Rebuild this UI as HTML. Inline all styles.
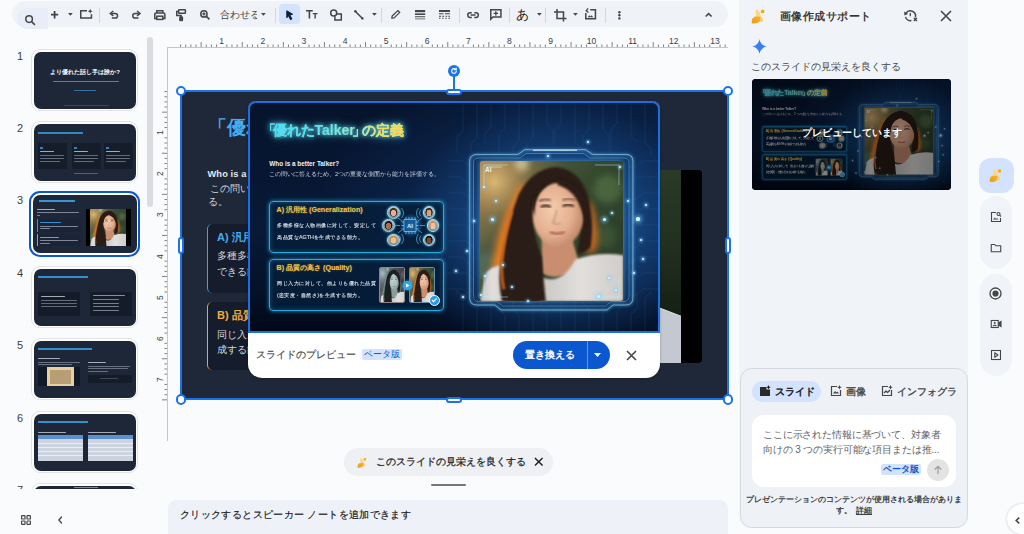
<!DOCTYPE html>
<html><head><meta charset="utf-8">
<style>
*{margin:0;padding:0;box-sizing:border-box}
html,body{width:1024px;height:534px;overflow:hidden;background:#f9fbfd;font-family:"Liberation Sans",sans-serif;color:#1f1f1f;position:relative}
.a{position:absolute}
svg{display:block}
#tb{left:12px;top:1px;width:716px;height:25.5px;border-radius:13px;background:#eff2f7}
.num{position:absolute;font-size:11px;color:#3c4043;width:16px;text-align:center;line-height:12px}
.thumb{position:absolute;left:31px;width:107px;height:62px;border-radius:9px;border:1.5px solid #e1e3e6;background:#fff;padding:1.5px}
.thumb .in{width:100%;height:100%;border-radius:7px;background:#1e2738;position:relative;overflow:hidden}
.thumb.sel{left:29.3px;width:110.7px;height:65.5px;margin-top:-1.7px;border:2.6px solid #0b57d0;padding:1.4px;border-radius:11px}
.nw{white-space:nowrap}

</style></head><body>
<!-- toolbar -->
<div id="tb" class="a"></div>
<div class="a" style="left:17px;top:8px;width:31px;height:21px;border-radius:10px 0 0 10px;background:#e9edf8"></div>
<svg class="a" style="left:25.30px;top:14.50px;overflow:visible" width="10.10" height="9.80" viewBox="0 0 10.10 9.80" fill="none" stroke="#444746" stroke-width="1.5" stroke-linecap="butt" stroke-linejoin="miter" ><circle cx="4.1" cy="4.1" r="3.3"/><path d="M6.5 6.5L9.9 9.9" stroke-width="1.7"/></svg>
<svg class="a" style="left:50.60px;top:10.70px;overflow:visible" width="7.20" height="7.40" viewBox="0 0 7.20 7.40" fill="none" stroke="#444746" stroke-width="1.5" stroke-linecap="butt" stroke-linejoin="miter" ><path d="M3.6 0V7.4M0 3.7H7.2" stroke-width="1.8"/></svg>
<svg class="a" style="left:67.90px;top:13.20px;overflow:visible" width="4.80" height="2.80" viewBox="0 0 4.80 2.80" fill="none" stroke="#444746" stroke-width="1.5" stroke-linecap="butt" stroke-linejoin="miter" ><path d="M0 0H4.8L2.4 2.8Z" fill="#444746" stroke="none"/></svg>
<svg class="a" style="left:80.00px;top:10.30px;overflow:visible" width="12.20" height="8.70" viewBox="0 0 12.20 8.70" fill="none" stroke="#444746" stroke-width="1.5" stroke-linecap="butt" stroke-linejoin="miter" ><path d="M7 0.75H0.75V7.95H11.45V4.2"/><path d="M10.2 -1.2L10.9 0.6 12.7 1.3 10.9 2 10.2 3.8 9.5 2 7.7 1.3 9.5 0.6Z" fill="#444746" stroke="none"/></svg>
<div class="a" style="left:99.30px;top:7.5px;width:1px;height:15px;background:#d3d6db"></div>
<svg class="a" style="left:109.80px;top:11.20px;overflow:visible" width="8.30" height="7.30" viewBox="0 0 8.30 7.30" fill="none" stroke="#444746" stroke-width="1.5" stroke-linecap="butt" stroke-linejoin="miter" ><path d="M1.6 2.4H5.2A2.35 2.35 0 0 1 5.2 7.1H1.8"/><path d="M3.3 0L0.3 2.4 3.3 4.8" stroke-linejoin="miter"/></svg>
<svg class="a" style="left:131.80px;top:11.20px;overflow:visible" width="8.30" height="7.30" viewBox="0 0 8.30 7.30" fill="none" stroke="#444746" stroke-width="1.5" stroke-linecap="butt" stroke-linejoin="miter" ><path d="M6.7 2.4H3.1A2.35 2.35 0 0 0 3.1 7.1H6.5"/><path d="M5 0L8 2.4 5 4.8"/></svg>
<svg class="a" style="left:153.70px;top:9.60px;overflow:visible" width="11.60" height="10.20" viewBox="0 0 11.60 10.20" fill="none" stroke="#444746" stroke-width="1.5" stroke-linecap="butt" stroke-linejoin="miter" ><path d="M2.8 3V0.75H8.8V3"/><path d="M2.6 8.5H0.75V4.2Q0.75 3 2 3H9.6Q10.85 3 10.85 4.2V8.5H9"/><rect x="2.8" y="6.2" width="6" height="3.25"/></svg>
<svg class="a" style="left:176.30px;top:8.90px;overflow:visible" width="10.20" height="11.60" viewBox="0 0 10.20 11.60" fill="none" stroke="#444746" stroke-width="1.5" stroke-linecap="butt" stroke-linejoin="miter" ><rect x="2.6" y="0.75" width="6.8" height="3.6" rx="0.6"/><path d="M2.6 2.6H0.75V6.6H5.1V8.4"/><rect x="3.9" y="8" width="2.5" height="3.6" rx="0.5" fill="#444746"/></svg>
<svg class="a" style="left:200.20px;top:10.00px;overflow:visible" width="9.60" height="9.60" viewBox="0 0 9.60 9.60" fill="none" stroke="#444746" stroke-width="1.5" stroke-linecap="butt" stroke-linejoin="miter" ><circle cx="3.9" cy="3.9" r="3.15"/><path d="M6.2 6.2L9.4 9.4" stroke-width="1.7"/><path d="M3.9 2.2V5.6M2.2 3.9H5.6" stroke-width="1.2"/></svg>
<div class="a nw" style="left:220px;top:7.5px;font-size:10.2px;color:#444746;line-height:14px;width:37px;overflow:hidden">合わせる</div>
<svg class="a" style="left:261.10px;top:12.60px;overflow:visible" width="4.80" height="2.80" viewBox="0 0 4.80 2.80" fill="none" stroke="#444746" stroke-width="1.5" stroke-linecap="butt" stroke-linejoin="miter" ><path d="M0 0H4.8L2.4 2.8Z" fill="#444746" stroke="none"/></svg>
<div class="a" style="left:274.90px;top:7.5px;width:1px;height:15px;background:#d3d6db"></div>
<div class="a" style="left:279px;top:4.2px;width:20.6px;height:19.4px;border-radius:4px;background:#d3e3fd"></div>
<svg class="a" style="left:285.70px;top:9.70px;overflow:visible" width="7.30" height="10.30" viewBox="0 0 7.30 10.30" fill="none" stroke="#444746" stroke-width="1.5" stroke-linecap="butt" stroke-linejoin="miter" ><path d="M0.8 0.8L6.6 4.2 3.9 5.1 5.9 9 4.5 9.7 2.6 5.8 0.8 7.8Z" fill="#0b1f3f" stroke="#0b1f3f" stroke-width="1" stroke-linejoin="round"/></svg>
<svg class="a" style="left:305.70px;top:10.30px;overflow:visible" width="11.50" height="8.50" viewBox="0 0 11.50 8.50" fill="none" stroke="#444746" stroke-width="1.5" stroke-linecap="butt" stroke-linejoin="miter" ><path d="M0 0.8H6.8M3.4 0.8V8.5" stroke-width="1.6"/><path d="M6.8 3.6H11.5M9.15 3.6V8.5" stroke-width="1.4"/></svg>
<svg class="a" style="left:329.90px;top:9.00px;overflow:visible" width="12.10" height="11.60" viewBox="0 0 12.10 11.60" fill="none" stroke="#444746" stroke-width="1.5" stroke-linecap="butt" stroke-linejoin="miter" ><circle cx="3.7" cy="3.9" r="3"/><path d="M6.9 4.9H11.3V10.9H4.9V7.3"/></svg>
<svg class="a" style="left:353.50px;top:9.70px;overflow:visible" width="9.70" height="9.70" viewBox="0 0 9.70 9.70" fill="none" stroke="#444746" stroke-width="1.5" stroke-linecap="butt" stroke-linejoin="miter" ><path d="M1.2 1.2L8.5 8.5" stroke-width="1.5"/><circle cx="1.3" cy="1.3" r="1.2" fill="#444746" stroke="none"/><circle cx="8.4" cy="8.4" r="1.2" fill="#444746" stroke="none"/></svg>
<svg class="a" style="left:371.90px;top:13.20px;overflow:visible" width="4.80" height="2.80" viewBox="0 0 4.80 2.80" fill="none" stroke="#444746" stroke-width="1.5" stroke-linecap="butt" stroke-linejoin="miter" ><path d="M0 0H4.8L2.4 2.8Z" fill="#444746" stroke="none"/></svg>
<div class="a" style="left:380.80px;top:7.5px;width:1px;height:15px;background:#d3d6db"></div>
<svg class="a" style="left:391.00px;top:9.60px;overflow:visible" width="9.50" height="8.90" viewBox="0 0 9.50 8.90" fill="none" stroke="#444746" stroke-width="1.5" stroke-linecap="butt" stroke-linejoin="miter" ><path d="M0.8 8.1L1.2 6 6.8 0.6 8.8 2.4 3.1 7.9Z" stroke-width="1.3" stroke-linejoin="round"/></svg>
<svg class="a" style="left:414.90px;top:10.30px;overflow:visible" width="10.20" height="9.50" viewBox="0 0 10.20 9.50" fill="none" stroke="#444746" stroke-width="1.5" stroke-linecap="butt" stroke-linejoin="miter" ><rect x="0" y="0" width="10.2" height="2.2" fill="#444746" stroke="none"/><rect x="0" y="3.4" width="10.2" height="1.6" fill="#444746" stroke="none"/><rect x="0" y="6.1" width="10.2" height="1.2" fill="#444746" stroke="none" opacity=".85"/><rect x="0" y="8.4" width="10.2" height="1" fill="#444746" stroke="none" opacity=".7"/></svg>
<svg class="a" style="left:438.80px;top:10.30px;overflow:visible" width="11.00" height="8.90" viewBox="0 0 11.00 8.90" fill="none" stroke="#444746" stroke-width="1.5" stroke-linecap="butt" stroke-linejoin="miter" ><rect x="0" y="0" width="11" height="2" fill="#444746" stroke="none"/><path d="M0 3.7H4.5M6 3.7H11M0 6.2H2.2M3.4 6.2H5.2M6.6 6.2H8.2M9.4 6.2H11M0 8.3H1.4M3 8.3H4.4M6.2 8.3H7.6M9.4 8.3H11" stroke-width="1.1"/></svg>
<div class="a" style="left:459.30px;top:7.5px;width:1px;height:15px;background:#d3d6db"></div>
<svg class="a" style="left:467.10px;top:11.60px;overflow:visible" width="12.10" height="6.20" viewBox="0 0 12.10 6.20" fill="none" stroke="#444746" stroke-width="1.5" stroke-linecap="butt" stroke-linejoin="miter" ><path d="M4.8 0.75H3.1A2.35 2.35 0 0 0 3.1 5.45H4.8M7.3 0.75H9A2.35 2.35 0 0 1 9 5.45H7.3M3.6 3.1H8.5" stroke-width="1.5"/></svg>
<svg class="a" style="left:490.10px;top:8.90px;overflow:visible" width="11.70" height="10.90" viewBox="0 0 11.70 10.90" fill="none" stroke="#444746" stroke-width="1.5" stroke-linecap="butt" stroke-linejoin="miter" ><path d="M0.75 10.2V0.75H10.95V8H2.9Z" stroke-linejoin="miter"/><path d="M5.85 2.2V6.6M3.65 4.4H8.05" stroke-width="1.4"/></svg>
<div class="a" style="left:509.20px;top:7.5px;width:1px;height:15px;background:#d3d6db"></div>
<div class="a nw" style="left:516px;top:6.5px;font-size:12.5px;color:#1f1f1f;line-height:17px">あ</div>
<svg class="a" style="left:536.60px;top:13.20px;overflow:visible" width="4.80" height="2.80" viewBox="0 0 4.80 2.80" fill="none" stroke="#444746" stroke-width="1.5" stroke-linecap="butt" stroke-linejoin="miter" ><path d="M0 0H4.8L2.4 2.8Z" fill="#444746" stroke="none"/></svg>
<div class="a" style="left:545.10px;top:7.5px;width:1px;height:15px;background:#d3d6db"></div>
<svg class="a" style="left:553.80px;top:8.60px;overflow:visible" width="12.50" height="12.50" viewBox="0 0 12.50 12.50" fill="none" stroke="#444746" stroke-width="1.5" stroke-linecap="butt" stroke-linejoin="miter" ><path d="M3 0V9.5H12.5M0 3H9.5V12.5" stroke-width="1.5"/></svg>
<svg class="a" style="left:572.80px;top:13.20px;overflow:visible" width="4.80" height="2.80" viewBox="0 0 4.80 2.80" fill="none" stroke="#444746" stroke-width="1.5" stroke-linecap="butt" stroke-linejoin="miter" ><path d="M0 0H4.8L2.4 2.8Z" fill="#444746" stroke="none"/></svg>
<svg class="a" style="left:585.40px;top:9.20px;overflow:visible" width="11.20" height="10.60" viewBox="0 0 11.20 10.60" fill="none" stroke="#444746" stroke-width="1.5" stroke-linecap="butt" stroke-linejoin="miter" ><path d="M0.75 4V9.85H10.45V0.75H5.2"/><path d="M3.2 -0.6L1.2 1.6 3.4 3.6" stroke-width="1.3"/><path d="M2.6 8.3L4.3 6.3 5.5 7.4 6.4 6.3 8.4 8.3Z" fill="#444746" stroke="none"/></svg>
<div class="a" style="left:604.70px;top:7.5px;width:1px;height:15px;background:#d3d6db"></div>
<svg class="a" style="left:618.00px;top:10.50px;overflow:visible" width="2.80" height="8.60" viewBox="0 0 2.80 8.60" fill="none" stroke="#444746" stroke-width="1.5" stroke-linecap="butt" stroke-linejoin="miter" ><circle cx="1.4" cy="1.2" r="1.2" fill="#444746" stroke="none"/><circle cx="1.4" cy="4.3" r="1.2" fill="#444746" stroke="none"/><circle cx="1.4" cy="7.4" r="1.2" fill="#444746" stroke="none"/></svg>
<svg class="a" style="left:704.80px;top:12.90px;overflow:visible" width="7.20" height="4.10" viewBox="0 0 7.20 4.10" fill="none" stroke="#444746" stroke-width="1.5" stroke-linecap="butt" stroke-linejoin="miter" ><path d="M0.6 3.6L3.6 0.6 6.6 3.6" stroke-width="1.5"/></svg><!-- filmstrip -->
<div class="a" style="left:147px;top:37px;width:6px;height:170px;border-radius:3px;background:#dadce0"></div>
<div class="num" style="left:12px;top:50px">1</div>
<div class="thumb" style="top:49px"><div class="in"><div class="a nw" style="left:51.5px;top:16.5px;font-size:12px;font-weight:bold;color:#fff;line-height:14px;transform:translateX(-50%) scale(.5);transform-origin:50% 0">より優れた話し手は誰か?</div><div class="a" style="left:19px;top:29px;width:66px;height:1px;background:#9aa6b8;opacity:0.65;border-radius:0.5px"></div><div class="a" style="left:40px;top:38px;width:22px;height:1px;background:#3fa0e0;opacity:0.61;border-radius:0.5px"></div><div class="a" style="left:30px;top:53px;width:45px;height:0.8px;background:#4a5a70;opacity:0.61;border-radius:0.5px"></div></div></div>
<div class="num" style="left:12px;top:122px">2</div>
<div class="thumb" style="top:121px"><div class="in"><div class="a" style="left:4.5px;top:8px;width:45px;height:2.3px;background:#3aa0e8;opacity:0.81;border-radius:0.5px"></div><div class="a" style="left:4.5px;top:19.5px;width:29px;height:26px;background:#151d2b;opacity:1;border-radius:1px"></div><div class="a" style="left:6.5px;top:23px;width:3px;height:2px;background:#3aa0e8;opacity:0.81;border-radius:0.5px"></div><div class="a" style="left:6.5px;top:27px;width:14px;height:1.4px;background:#e0e4ea;opacity:0.71;border-radius:0.5px"></div><div class="a" style="left:6.5px;top:31px;width:24px;height:1px;background:#b0b8c4;opacity:0.51;border-radius:0.5px"></div><div class="a" style="left:6.5px;top:34px;width:24px;height:1px;background:#b0b8c4;opacity:0.51;border-radius:0.5px"></div><div class="a" style="left:6.5px;top:37px;width:20px;height:1px;background:#b0b8c4;opacity:0.51;border-radius:0.5px"></div><div class="a" style="left:38px;top:19.5px;width:29px;height:26px;background:#151d2b;opacity:1;border-radius:1px"></div><div class="a" style="left:40px;top:23px;width:3px;height:2px;background:#3aa0e8;opacity:0.81;border-radius:0.5px"></div><div class="a" style="left:40px;top:27px;width:14px;height:1.4px;background:#e0e4ea;opacity:0.71;border-radius:0.5px"></div><div class="a" style="left:40px;top:31px;width:24px;height:1px;background:#b0b8c4;opacity:0.51;border-radius:0.5px"></div><div class="a" style="left:40px;top:34px;width:24px;height:1px;background:#b0b8c4;opacity:0.51;border-radius:0.5px"></div><div class="a" style="left:40px;top:37px;width:20px;height:1px;background:#b0b8c4;opacity:0.51;border-radius:0.5px"></div><div class="a" style="left:70px;top:19.5px;width:29px;height:26px;background:#151d2b;opacity:1;border-radius:1px"></div><div class="a" style="left:72px;top:23px;width:3px;height:2px;background:#3aa0e8;opacity:0.81;border-radius:0.5px"></div><div class="a" style="left:72px;top:27px;width:14px;height:1.4px;background:#e0e4ea;opacity:0.71;border-radius:0.5px"></div><div class="a" style="left:72px;top:31px;width:24px;height:1px;background:#b0b8c4;opacity:0.51;border-radius:0.5px"></div><div class="a" style="left:72px;top:34px;width:24px;height:1px;background:#b0b8c4;opacity:0.51;border-radius:0.5px"></div><div class="a" style="left:72px;top:37px;width:20px;height:1px;background:#b0b8c4;opacity:0.51;border-radius:0.5px"></div><div class="a" style="left:40px;top:49px;width:24px;height:1px;background:#8a96a8;opacity:0.51;border-radius:0.5px"></div></div></div>
<div class="num" style="left:12px;top:194px">3</div>
<div class="thumb sel" style="top:193px"><div class="in"><div class="a" style="left:6.6px;top:5px;width:36px;height:2.4px;background:#3aa8f0;opacity:0.86;border-radius:0.5px"></div><div class="a" style="left:4.5px;top:14px;width:18px;height:1.3px;background:#e0e4ea;opacity:0.71;border-radius:0.5px"></div><div class="a" style="left:4.5px;top:17px;width:42px;height:1.3px;background:#c0c8d4;opacity:0.61;border-radius:0.5px"></div><div class="a" style="left:4.5px;top:19.8px;width:3px;height:1.3px;background:#c0c8d4;opacity:0.61;border-radius:0.5px"></div><div class="a" style="left:4.6px;top:24.3px;width:44px;height:13px;background:#1a2436;opacity:1;border-radius:0.5px"></div><div class="a" style="left:4.6px;top:24.3px;width:0.8px;height:13px;background:#3aa0e8;opacity:0.91;border-radius:0px"></div><div class="a" style="left:7px;top:26.8px;width:21px;height:1.5px;background:#3aa8f0;opacity:0.81;border-radius:0.5px"></div><div class="a" style="left:7px;top:30.8px;width:38px;height:1.2px;background:#c0c8d4;opacity:0.61;border-radius:0.5px"></div><div class="a" style="left:7px;top:33.5px;width:10px;height:1.2px;background:#c0c8d4;opacity:0.61;border-radius:0.5px"></div><div class="a" style="left:4.6px;top:39.4px;width:44px;height:12.4px;background:#1a2436;opacity:1;border-radius:0.5px"></div><div class="a" style="left:4.6px;top:39.4px;width:0.8px;height:12.4px;background:#e8a030;opacity:0.91;border-radius:0px"></div><div class="a" style="left:7px;top:41.8px;width:19px;height:1.5px;background:#f0a830;opacity:0.81;border-radius:0.5px"></div><div class="a" style="left:7px;top:45.6px;width:38px;height:1.2px;background:#c0c8d4;opacity:0.61;border-radius:0.5px"></div><div class="a" style="left:7px;top:48.2px;width:10px;height:1.2px;background:#c0c8d4;opacity:0.61;border-radius:0.5px"></div><div class="a" style="left:53.8px;top:13.8px;width:44.5px;height:37.4px;background:#000;overflow:hidden"><div class="a" style="left:4px;top:0;width:36px;height:37.4px;overflow:hidden"><svg width="36" height="37.4" viewBox="0 0 144 140" preserveAspectRatio="none">
<defs>
<linearGradient id="bgt3" x1="0" y1="0" x2="1" y2="0.6"><stop offset="0" stop-color="#8a7a58"/><stop offset=".3" stop-color="#4e5a40"/><stop offset=".65" stop-color="#34482e"/><stop offset="1" stop-color="#2c3e2a"/></linearGradient>
<radialGradient id="glt3" cx=".1" cy=".15" r=".5"><stop offset="0" stop-color="#e8c078" stop-opacity=".9"/><stop offset=".55" stop-color="#b08048" stop-opacity=".35"/><stop offset="1" stop-color="#b08048" stop-opacity="0"/></radialGradient>
<radialGradient id="fct3" cx=".38" cy=".42" r=".65"><stop offset="0" stop-color="#f4ccae"/><stop offset=".6" stop-color="#e4b090"/><stop offset="1" stop-color="#c08466"/></radialGradient>
<linearGradient id="sht3" x1="0" y1="0" x2="1" y2="0"><stop offset="0" stop-color="#c8c6c4"/><stop offset=".5" stop-color="#e2dfdc"/><stop offset="1" stop-color="#cfccca"/></linearGradient>
<filter id="b1t3" x="-20%" y="-20%" width="140%" height="140%"><feGaussianBlur stdDeviation="0.9"/></filter>
<filter id="b2t3" x="-40%" y="-40%" width="180%" height="180%"><feGaussianBlur stdDeviation="3.5"/></filter>
</defs>
<rect width="144" height="140" fill="url(#bgt3)"/>
<rect width="144" height="140" fill="url(#glt3)"/>
<circle cx="42" cy="3" r="7" fill="#f0e0b0" opacity=".7" filter="url(#b2t3)"/>
<circle cx="128" cy="28" r="14" fill="#5a7a48" opacity=".6" filter="url(#b2t3)"/>
<circle cx="125" cy="75" r="12" fill="#48663a" opacity=".5" filter="url(#b2t3)"/>
<circle cx="8" cy="105" r="14" fill="#5a7a70" opacity=".5" filter="url(#b2t3)"/>
<path d="M40 24 Q22 56 14 94 Q9 118 14 140 L30 140 Q26 110 32 80 Q38 52 50 26Z" fill="#f08024" opacity=".95" filter="url(#b2t3)"/>
<path d="M110 40 Q121 64 116 90 L106 92 Q112 66 104 44Z" fill="#e87020" opacity=".9" filter="url(#b2t3)"/>
<path d="M0 140 L6 112 Q12 104 24 104 L26 140Z" fill="url(#sht3)" filter="url(#b1t3)"/>
<path d="M62 76 L62 112 Q80 122 100 104 L92 76Z" fill="#c98e70" filter="url(#b1t3)"/>
<path d="M96 98 Q120 90 144 94 L144 140 L60 140 Q58 124 62 116 Q82 124 96 98Z" fill="url(#sht3)" filter="url(#b1t3)"/>
<path d="M76 6 Q99 8 108 34 Q115 60 111 86 Q104 93 98 92 Q102 70 100 48 Q92 28 76 24 Q58 30 54 52 Q53 74 62 96 Q64 120 66 140 L22 140 Q17 116 22 96 Q28 60 39 33 Q52 8 76 6Z" fill="#2c1a14" filter="url(#b1t3)"/>
<path d="M32 50 Q24 76 22 100 Q21 116 24 128" stroke="#d86a1c" stroke-width="3" fill="none" opacity=".9" filter="url(#b1t3)"/>
<ellipse cx="78.5" cy="54" rx="25.5" ry="32" fill="url(#fct3)" filter="url(#b1t3)"/>
<path d="M78 18 Q100 20 107 45 Q108 57 106 66 Q103 46 94 34 Q86 26 78 24Z" fill="#2c1a14" filter="url(#b1t3)"/>
<path d="M52 46 Q54 26 72 19 L62 28 Q55 36 54.5 55Z" fill="#2c1a14" filter="url(#b1t3)"/>
<path d="M61 46 Q66 43 71 46M83 45 Q88.5 42 94 45" stroke="#2a1410" stroke-width="2" fill="none" filter="url(#b1t3)"/>
<path d="M77 49 Q75 58 73 62 Q77 64 81 62" stroke="#b07860" stroke-width="1" fill="none" filter="url(#b1t3)"/>
<path d="M59 40 Q65 37 71 39M83 39 Q89 36 95 39" stroke="#3a2018" stroke-width="1.2" fill="none" filter="url(#b1t3)"/><path d="M70 71 Q77 74 85 71" stroke="#b0605a" stroke-width="2.4" fill="none" filter="url(#b1t3)"/>
</svg></div></div></div></div>
<div class="num" style="left:12px;top:267px">4</div>
<div class="thumb" style="top:266px"><div class="in"><div class="a" style="left:4.5px;top:7.5px;width:50px;height:2.4px;background:#3aa8f0;opacity:0.81;border-radius:0.5px"></div><div class="a" style="left:4.5px;top:23px;width:42px;height:24px;background:#141c2a;opacity:1;border-radius:0.5px"></div><div class="a" style="left:7px;top:27px;width:24px;height:1.4px;background:#e0e4ea;opacity:0.71;border-radius:0.5px"></div><div class="a" style="left:7px;top:31.5px;width:36px;height:1px;background:#b0b8c4;opacity:0.51;border-radius:0.5px"></div><div class="a" style="left:7px;top:34.5px;width:36px;height:1px;background:#b0b8c4;opacity:0.51;border-radius:0.5px"></div><div class="a" style="left:7px;top:37.5px;width:36px;height:1px;background:#b0b8c4;opacity:0.51;border-radius:0.5px"></div><div class="a" style="left:56px;top:23px;width:42px;height:24px;background:#141c2a;opacity:1;border-radius:0.5px"></div><div class="a" style="left:59px;top:26px;width:32px;height:1.6px;background:#f0b030;opacity:0.75;border-radius:0.5px"></div><div class="a" style="left:59px;top:30.5px;width:26px;height:1.2px;background:#c0c8d4;opacity:0.57;border-radius:0.5px"></div><div class="a" style="left:59px;top:34px;width:26px;height:1.2px;background:#c0c8d4;opacity:0.57;border-radius:0.5px"></div><div class="a" style="left:59px;top:37.5px;width:26px;height:1.2px;background:#c0c8d4;opacity:0.57;border-radius:0.5px"></div><div class="a" style="left:59px;top:41px;width:26px;height:1.2px;background:#c0c8d4;opacity:0.57;border-radius:0.5px"></div></div></div>
<div class="num" style="left:12px;top:339px">5</div>
<div class="thumb" style="top:338px"><div class="in"><div class="a" style="left:4.5px;top:7.5px;width:54px;height:2.4px;background:#3aa8f0;opacity:0.81;border-radius:0.5px"></div><div class="a" style="left:4.5px;top:17px;width:22px;height:1.4px;background:#e0e4ea;opacity:0.71;border-radius:0.5px"></div><div class="a" style="left:4.5px;top:21px;width:42px;height:1px;background:#b0b8c4;opacity:0.51;border-radius:0.5px"></div><div class="a" style="left:4.5px;top:23.5px;width:34px;height:1px;background:#b0b8c4;opacity:0.51;border-radius:0.5px"></div><div class="a" style="left:4.5px;top:26px;width:42px;height:19px;background:#111827;opacity:1;border-radius:0.5px"></div><div class="a" style="left:13px;top:26.5px;width:27px;height:19px;background:#e8cfa0;opacity:1;border-radius:0px"></div><div class="a" style="left:16px;top:29px;width:21px;height:14px;background:#8a7050;opacity:0.51;border-radius:0px"></div><div class="a" style="left:54px;top:21px;width:18px;height:1.4px;background:#e0e4ea;opacity:0.71;border-radius:0.5px"></div><div class="a" style="left:54px;top:25px;width:42px;height:1px;background:#b0b8c4;opacity:0.51;border-radius:0.5px"></div><div class="a" style="left:54px;top:27.5px;width:40px;height:1px;background:#b0b8c4;opacity:0.51;border-radius:0.5px"></div><div class="a" style="left:54px;top:30px;width:20px;height:1px;background:#b0b8c4;opacity:0.51;border-radius:0.5px"></div><div class="a" style="left:54px;top:34px;width:44px;height:8px;background:#141c2a;opacity:1;border-radius:0.5px"></div><div class="a" style="left:66px;top:37.5px;width:18px;height:1px;background:#6a7688;opacity:0.51;border-radius:0.5px"></div></div></div>
<div class="num" style="left:12px;top:412px">6</div>
<div class="thumb" style="top:411px"><div class="in"><div class="a" style="left:4.5px;top:7px;width:50px;height:2.3px;background:#3aa8f0;opacity:0.81;border-radius:0.5px"></div><div class="a" style="left:4.5px;top:18px;width:28px;height:1.5px;background:#e0e4ea;opacity:0.71;border-radius:0.5px"></div><div class="a" style="left:4.5px;top:21px;width:45px;height:26px;background:#cdd3de;opacity:1;border-radius:0px"></div><div class="a" style="left:4.5px;top:21px;width:45px;height:4px;background:#5a8fd0;opacity:1;border-radius:0px"></div><div class="a" style="left:4.5px;top:29px;width:45px;height:0.6px;background:#ffffff;opacity:0.61;border-radius:0px"></div><div class="a" style="left:4.5px;top:33px;width:45px;height:0.6px;background:#ffffff;opacity:0.61;border-radius:0px"></div><div class="a" style="left:4.5px;top:37px;width:45px;height:0.6px;background:#ffffff;opacity:0.61;border-radius:0px"></div><div class="a" style="left:4.5px;top:41px;width:45px;height:0.6px;background:#ffffff;opacity:0.61;border-radius:0px"></div><div class="a" style="left:54px;top:18px;width:28px;height:1.5px;background:#e0e4ea;opacity:0.71;border-radius:0.5px"></div><div class="a" style="left:54px;top:21px;width:45px;height:26px;background:#cdd3de;opacity:1;border-radius:0px"></div><div class="a" style="left:54px;top:21px;width:45px;height:4px;background:#5a8fd0;opacity:1;border-radius:0px"></div><div class="a" style="left:54px;top:29px;width:45px;height:0.6px;background:#ffffff;opacity:0.61;border-radius:0px"></div><div class="a" style="left:54px;top:33px;width:45px;height:0.6px;background:#ffffff;opacity:0.61;border-radius:0px"></div><div class="a" style="left:54px;top:37px;width:45px;height:0.6px;background:#ffffff;opacity:0.61;border-radius:0px"></div><div class="a" style="left:54px;top:41px;width:45px;height:0.6px;background:#ffffff;opacity:0.61;border-radius:0px"></div></div></div>
<div class="a" style="left:0;top:477px;width:160px;height:12px;overflow:hidden">
<div class="num" style="left:12px;top:7px">7</div>
<div class="thumb" style="top:6px"><div class="in"><div class="a" style="left:40px;top:1px;width:24px;height:1.5px;background:#c0c8d4;opacity:.6"></div></div></div></div>
<svg class="a" style="left:20.5px;top:514.8px" width="10" height="10" viewBox="0 0 10 10" fill="none" stroke="#444746" stroke-width="1.2"><rect x=".6" y=".6" width="3.4" height="3.4" rx=".6"/><rect x="6" y=".6" width="3.4" height="3.4" rx=".6"/><rect x=".6" y="6" width="3.4" height="3.4" rx=".6"/><rect x="6" y="6" width="3.4" height="3.4" rx=".6"/></svg>
<svg class="a" style="left:57.8px;top:516.3px" width="4.5" height="8" viewBox="0 0 4.5 8" fill="none" stroke="#444746" stroke-width="1.4"><path d="M4 .5L.9 4 4 7.5"/></svg><!-- rulers -->
<div class="a" style="left:213.70px;top:36.5px;width:16px;text-align:center;font-size:8.5px;line-height:9px;color:#3c4043">1</div>
<div class="a" style="left:254.80px;top:36.5px;width:16px;text-align:center;font-size:8.5px;line-height:9px;color:#3c4043">2</div>
<div class="a" style="left:295.90px;top:36.5px;width:16px;text-align:center;font-size:8.5px;line-height:9px;color:#3c4043">3</div>
<div class="a" style="left:337.00px;top:36.5px;width:16px;text-align:center;font-size:8.5px;line-height:9px;color:#3c4043">4</div>
<div class="a" style="left:378.10px;top:36.5px;width:16px;text-align:center;font-size:8.5px;line-height:9px;color:#3c4043">5</div>
<div class="a" style="left:419.20px;top:36.5px;width:16px;text-align:center;font-size:8.5px;line-height:9px;color:#3c4043">6</div>
<div class="a" style="left:460.30px;top:36.5px;width:16px;text-align:center;font-size:8.5px;line-height:9px;color:#3c4043">7</div>
<div class="a" style="left:501.40px;top:36.5px;width:16px;text-align:center;font-size:8.5px;line-height:9px;color:#3c4043">8</div>
<div class="a" style="left:542.50px;top:36.5px;width:16px;text-align:center;font-size:8.5px;line-height:9px;color:#3c4043">9</div>
<div class="a" style="left:583.60px;top:36.5px;width:16px;text-align:center;font-size:8.5px;line-height:9px;color:#3c4043">10</div>
<div class="a" style="left:624.70px;top:36.5px;width:16px;text-align:center;font-size:8.5px;line-height:9px;color:#3c4043">11</div>
<div class="a" style="left:665.80px;top:36.5px;width:16px;text-align:center;font-size:8.5px;line-height:9px;color:#3c4043">12</div>
<div class="a" style="left:706.90px;top:36.5px;width:16px;text-align:center;font-size:8.5px;line-height:9px;color:#3c4043">13</div>
<div class="a" style="left:151.5px;top:128.20px;width:16px;text-align:center;font-size:8.5px;line-height:9px;color:#3c4043;transform:rotate(-90deg)">1</div>
<div class="a" style="left:151.5px;top:169.30px;width:16px;text-align:center;font-size:8.5px;line-height:9px;color:#3c4043;transform:rotate(-90deg)">2</div>
<div class="a" style="left:151.5px;top:210.40px;width:16px;text-align:center;font-size:8.5px;line-height:9px;color:#3c4043;transform:rotate(-90deg)">3</div>
<div class="a" style="left:151.5px;top:251.50px;width:16px;text-align:center;font-size:8.5px;line-height:9px;color:#3c4043;transform:rotate(-90deg)">4</div>
<div class="a" style="left:151.5px;top:292.60px;width:16px;text-align:center;font-size:8.5px;line-height:9px;color:#3c4043;transform:rotate(-90deg)">5</div>
<div class="a" style="left:151.5px;top:333.70px;width:16px;text-align:center;font-size:8.5px;line-height:9px;color:#3c4043;transform:rotate(-90deg)">6</div>
<div class="a" style="left:151.5px;top:374.80px;width:16px;text-align:center;font-size:8.5px;line-height:9px;color:#3c4043;transform:rotate(-90deg)">7</div>
<svg class="a" style="left:0;top:0" width="1024" height="534" viewBox="0 0 1024 534"><path d="M180.60 44.5V47 M185.74 44.5V47 M190.88 44.5V47 M196.01 44.5V47 M201.15 42V47 M206.29 44.5V47 M211.43 44.5V47 M216.56 44.5V47 M226.84 44.5V47 M231.97 44.5V47 M237.11 44.5V47 M242.25 42V47 M247.39 44.5V47 M252.52 44.5V47 M257.66 44.5V47 M267.94 44.5V47 M273.07 44.5V47 M278.21 44.5V47 M283.35 42V47 M288.49 44.5V47 M293.62 44.5V47 M298.76 44.5V47 M309.04 44.5V47 M314.18 44.5V47 M319.31 44.5V47 M324.45 42V47 M329.59 44.5V47 M334.73 44.5V47 M339.86 44.5V47 M350.14 44.5V47 M355.27 44.5V47 M360.41 44.5V47 M365.55 42V47 M370.69 44.5V47 M375.82 44.5V47 M380.96 44.5V47 M391.24 44.5V47 M396.38 44.5V47 M401.51 44.5V47 M406.65 42V47 M411.79 44.5V47 M416.93 44.5V47 M422.06 44.5V47 M432.34 44.5V47 M437.48 44.5V47 M442.61 44.5V47 M447.75 42V47 M452.89 44.5V47 M458.02 44.5V47 M463.16 44.5V47 M473.44 44.5V47 M478.58 44.5V47 M483.71 44.5V47 M488.85 42V47 M493.99 44.5V47 M499.12 44.5V47 M504.26 44.5V47 M514.54 44.5V47 M519.67 44.5V47 M524.81 44.5V47 M529.95 42V47 M535.09 44.5V47 M540.23 44.5V47 M545.36 44.5V47 M555.64 44.5V47 M560.77 44.5V47 M565.91 44.5V47 M571.05 42V47 M576.19 44.5V47 M581.33 44.5V47 M586.46 44.5V47 M596.74 44.5V47 M601.88 44.5V47 M607.01 44.5V47 M612.15 42V47 M617.29 44.5V47 M622.42 44.5V47 M627.56 44.5V47 M637.84 44.5V47 M642.98 44.5V47 M648.11 44.5V47 M653.25 42V47 M658.39 44.5V47 M663.52 44.5V47 M668.66 44.5V47 M678.94 44.5V47 M684.08 44.5V47 M689.21 44.5V47 M694.35 42V47 M699.49 44.5V47 M704.62 44.5V47 M709.76 44.5V47 M720.04 44.5V47 M725.18 44.5V47 M164.5 91.60H167 M164.5 96.74H167 M164.5 101.88H167 M164.5 107.01H167 M162 112.15H167 M164.5 117.29H167 M164.5 122.42H167 M164.5 127.56H167 M164.5 137.84H167 M164.5 142.97H167 M164.5 148.11H167 M162 153.25H167 M164.5 158.39H167 M164.5 163.52H167 M164.5 168.66H167 M164.5 178.94H167 M164.5 184.07H167 M164.5 189.21H167 M162 194.35H167 M164.5 199.49H167 M164.5 204.62H167 M164.5 209.76H167 M164.5 220.04H167 M164.5 225.18H167 M164.5 230.31H167 M162 235.45H167 M164.5 240.59H167 M164.5 245.72H167 M164.5 250.86H167 M164.5 261.14H167 M164.5 266.27H167 M164.5 271.41H167 M162 276.55H167 M164.5 281.69H167 M164.5 286.82H167 M164.5 291.96H167 M164.5 302.24H167 M164.5 307.38H167 M164.5 312.51H167 M162 317.65H167 M164.5 322.79H167 M164.5 327.93H167 M164.5 333.06H167 M164.5 343.34H167 M164.5 348.48H167 M164.5 353.61H167 M162 358.75H167 M164.5 363.89H167 M164.5 369.02H167 M164.5 374.16H167 M164.5 384.44H167 M164.5 389.58H167 M164.5 394.71H167 M162 399.85H167" stroke="#747775" stroke-width="1" fill="none" opacity=".9"/><path d="M167 47.5H728M167.5 47.5V441" stroke="#c4c7c5" stroke-width="1" fill="none"/></svg><!-- slide -->
<div class="a" style="left:181px;top:92px;width:547px;height:308px;background:#1f2838;overflow:hidden">
 <div class="a nw" style="left:26.5px;top:25px;font-size:18.5px;font-weight:bold;color:#44aef0;line-height:22px;letter-spacing:0.3px">「優れたTalker」の定義</div>
 <div class="a nw" style="left:26.5px;top:75.5px;font-size:9.3px;font-weight:bold;color:#e4e8ee;line-height:13px;letter-spacing:.1px">Who is a better Talker?</div>
 <div class="a nw" style="left:26.5px;top:90px;font-size:10px;color:#d4d8de;line-height:13px">&nbsp;この問いに答えるため、2つの重要な側面から能力を評価す</div>
 <div class="a nw" style="left:26.5px;top:102.5px;font-size:10px;color:#d4d8de;line-height:13px">る。</div>
 <div class="a" style="left:26px;top:131.5px;width:200px;height:69px;background:#151c2b;border-radius:5px;border-left:1.8px solid #3ba3ee"></div>
 <div class="a nw" style="left:36px;top:138.5px;font-size:11px;font-weight:bold;color:#44aef0;line-height:13px">A) 汎用性 (Generalization)</div>
 <div class="a nw" style="left:36px;top:158px;font-size:9.5px;color:#d4d8de;line-height:12px">多種多様な人物画像に対して、安定して高品質</div>
 <div class="a nw" style="left:36px;top:174px;font-size:9.5px;color:#d4d8de;line-height:12px">できる能力。</div>
 <div class="a" style="left:26px;top:209.5px;width:200px;height:68px;background:#151c2b;border-radius:5px;border-left:1.8px solid #eea833"></div>
 <div class="a nw" style="left:36px;top:217px;font-size:11px;font-weight:bold;color:#f2ae3a;line-height:13px">B) 品質の高さ (Quality)</div>
 <div class="a nw" style="left:36px;top:237px;font-size:9.5px;color:#d4d8de;line-height:12px">同じ入力に対して、他よりも優れた品質</div>
 <div class="a nw" style="left:36px;top:251.5px;font-size:9.5px;color:#d4d8de;line-height:12px">成する能力。</div>
 <div class="a" style="left:478px;top:78px;width:42.6px;height:192.5px;background:#000;border-radius:0 4px 4px 0;overflow:hidden">
  <div class="a" style="left:0;top:0;width:22px;height:192.5px;background:linear-gradient(180deg,#2a3a26 0%,#223020 40%,#182418 65%,#101810 100%)"></div>
  <svg class="a" style="left:0;top:0" width="22" height="193" viewBox="0 0 22 193"><path d="M0 137.8L22 146.2V193H0Z" fill="#c4c8d0"/><path d="M0 137.8L22 146.2" stroke="#e8e0d8" stroke-width="1"/></svg>
 </div>
</div>
<div class="a" style="left:180px;top:90.2px;width:549px;height:310.3px;border:2px solid #1a73e8"></div>
<div class="a" style="left:453.4px;top:76px;width:1.6px;height:14px;background:#1a73e8"></div>
<div class="a" style="left:448px;top:64.5px;width:12.4px;height:12.4px;border-radius:50%;background:#1a73e8"></div>
<svg class="a" style="left:450.2px;top:66.6px" width="8" height="8" viewBox="0 0 24 24" fill="none" stroke="#fff" stroke-width="3.5" stroke-linecap="round"><path d="M19 12a7 7 0 1 1-2.2-5.1"/><path d="M18.5 3v5h-5" stroke-linejoin="round"/></svg>
<div class="a" style="left:446.2px;top:88.9px;width:15.8px;height:6.2px;border-radius:3.1px;background:#fff;border:2px solid #1a73e8"></div>
<div class="a" style="left:446.2px;top:397px;width:15.8px;height:6.2px;border-radius:3.1px;background:#fff;border:2px solid #1a73e8"></div>
<div class="a" style="left:178px;top:237.4px;width:6.2px;height:16.5px;border-radius:3.1px;background:#fff;border:2px solid #1a73e8"></div>
<div class="a" style="left:724.8px;top:237.4px;width:6.2px;height:16.5px;border-radius:3.1px;background:#fff;border:2px solid #1a73e8"></div>
<div class="a" style="left:175.7px;top:85.8px;width:10.6px;height:10.6px;border-radius:50%;background:#fff;border:2.4px solid #1a73e8"></div>
<div class="a" style="left:722.8px;top:85.8px;width:10.6px;height:10.6px;border-radius:50%;background:#fff;border:2.4px solid #1a73e8"></div>
<div class="a" style="left:175.7px;top:394.4px;width:10.6px;height:10.6px;border-radius:50%;background:#fff;border:2.4px solid #1a73e8"></div>
<div class="a" style="left:722.8px;top:394.4px;width:10.6px;height:10.6px;border-radius:50%;background:#fff;border:2.4px solid #1a73e8"></div>
<!-- preview card -->
<div class="a" style="left:248px;top:101px;width:412px;height:276.5px;border-radius:8px 8px 14px 14px;background:#fff;overflow:hidden;box-shadow:0 1px 3px rgba(0,0,0,.25)">
<div class="a" style="left:0;top:0;width:412px;height:231px;overflow:hidden;background:
radial-gradient(ellipse 150px 130px at 305px 125px, rgba(40,120,200,.55), rgba(20,80,160,0) 100%),
radial-gradient(ellipse 260px 160px at 330px 110px, rgba(20,70,140,.6), rgba(10,40,90,0) 100%),
linear-gradient(180deg,#06132b 0%,#081a38 55%,#041026 85%,#020918 100%)"><svg class="a" style="left:0;top:0" width="412" height="231" viewBox="0 0 412 231"><path d="M215 0V30l-6 6V52 M215 231V195l-6 -6V194 M229 0V37l-6 6V51 M229 231V197l-6 -6V187 M243 0V26l-6 6V42 M243 231V202l6 -6V194 M257 0V27l-6 6V53 M257 231V214l-6 -6V192 M271 0V40l-6 6V52 M271 231V214l-6 -6V195 M285 0V37l-6 6V49 M285 231V202l-6 -6V187 M299 0V23l6 6V45 M299 231V212l-6 -6V190 M313 0V23l-6 6V41 M313 231V196l-6 -6V188 M327 0V41l6 6V50 M327 231V201l6 -6V190 M341 0V29l-6 6V45 M341 231V208l-6 -6V186 M355 0V29l6 6V50 M355 231V201l6 -6V186 M369 0V22l-6 6V53 M369 231V210l6 -6V193 M383 0V35l6 6V41 M383 231V213l6 -6V190 M397 0V42l6 6V55 M397 231V197l6 -6V194 M412 60H394l-6 6H380 M200 60H216l6 6H222 M412 76H388l-6 6H380 M200 76H213l6 6H222 M412 92H395l-6 6H380 M200 92H216l6 6H222 M412 108H388l-6 6H380 M200 108H216l6 6H222 M412 124H389l-6 6H380 M200 124H217l6 6H222 M412 140H395l-6 6H380 M200 140H219l6 6H222 M412 156H390l-6 6H380 M200 156H214l6 6H222 M412 172H394l-6 6H380 M200 172H219l6 6H222 M412 188H395l-6 6H380 M200 188H215l6 6H222" stroke="#3f8fd0" stroke-width=".6" fill="none" opacity=".22"/></svg><div class="a nw" style="left:14px;top:20px;font-size:14px;font-weight:bold;line-height:18px;filter:drop-shadow(0 0 2px rgba(90,220,235,.9)) drop-shadow(0 0 4px rgba(90,220,235,.45))"><span style="background:linear-gradient(90deg,#4edaf2 0%,#62e0ec 40%,#9ae8c8 68%,#e8e070 80%,#f6d860 100%);-webkit-background-clip:text;background-clip:text;color:transparent;-webkit-text-stroke:.2px transparent"><span style="margin-right:-3.5px">「</span>優れたTalker<span style="margin-left:-3px;margin-right:-3.5px">」</span>の定義</span></div><div class="a nw" style="left:21.3px;top:58.2px;font-size:6.4px;font-weight:bold;color:#f0f2f5;line-height:9px">Who is a better Talker?</div><div class="a nw" style="left:21px;top:67.5px;font-size:12px;color:#c8d0da;line-height:18px;transform:scale(.5);transform-origin:0 0">この問いに答えるため、2つの重要な側面から能力を評価する。</div><div class="a" style="left:21.2px;top:99.5px;width:174.5px;height:52px;border:1.2px solid #2fa8d8;border-radius:4px;background:rgba(6,30,58,.85);box-shadow:0 0 4px rgba(40,170,230,.8),inset 0 0 5px rgba(40,170,230,.4)"></div><div class="a nw" style="left:28.6px;top:105.1px;font-size:7.1px;font-weight:bold;color:#f2c24a;line-height:9px;text-shadow:0 0 2px rgba(240,190,60,.5)">A) 汎用性 (Generalization)</div><div class="a nw" style="left:28.6px;top:119.7px;font-size:10.8px;color:#d5dce4;line-height:14px;-webkit-text-stroke:.3px #d5dce4;transform:scale(.5);transform-origin:0 0">多種多様な人物画像に対して、安定して</div><div class="a nw" style="left:28.6px;top:131.7px;font-size:10.8px;color:#d5dce4;line-height:14px;-webkit-text-stroke:.3px #d5dce4;transform:scale(.5);transform-origin:0 0">高品質なAGTHを生成できる能力。</div><div class="a" style="left:21.2px;top:157.7px;width:174.5px;height:52px;border:1.2px solid #2fa8d8;border-radius:4px;background:rgba(6,30,58,.85);box-shadow:0 0 4px rgba(40,170,230,.8),inset 0 0 5px rgba(40,170,230,.4)"></div><div class="a nw" style="left:28.6px;top:163.29999999999998px;font-size:7.1px;font-weight:bold;color:#f2c24a;line-height:9px;text-shadow:0 0 2px rgba(240,190,60,.5)">B) 品質の高さ (Quality)</div><div class="a nw" style="left:28.6px;top:177.89999999999998px;font-size:10.8px;color:#d5dce4;line-height:14px;-webkit-text-stroke:.3px #d5dce4;transform:scale(.5);transform-origin:0 0">同じ入力に対して、他よりも優れた品質</div><div class="a nw" style="left:28.6px;top:189.89999999999998px;font-size:10.8px;color:#d5dce4;line-height:14px;-webkit-text-stroke:.3px #d5dce4;transform:scale(.5);transform-origin:0 0">(忠実度・自然さ)を生成する能力。</div><div class="a" style="left:139.39999999999998px;top:105.0px;width:12.6px;height:12.6px;border-radius:50%;background:radial-gradient(ellipse 26% 32% at 50% 55%,#e0b090 0 90%,rgba(0,0,0,0) 100%),radial-gradient(ellipse 38% 42% at 50% 48%,#4a3020 0 88%,rgba(0,0,0,0) 100%),linear-gradient(180deg,#a8c0d0,#6a8aa0);border:1px solid #a8e4f4;box-shadow:0 0 2.5px #5ac0e8"></div><div class="a" style="left:174.7px;top:105.0px;width:12.6px;height:12.6px;border-radius:50%;background:radial-gradient(ellipse 26% 32% at 50% 55%,#d8a080 0 90%,rgba(0,0,0,0) 100%),radial-gradient(ellipse 38% 42% at 50% 48%,#3a2a20 0 88%,rgba(0,0,0,0) 100%),linear-gradient(180deg,#a8c0d0,#6a8aa0);border:1px solid #a8e4f4;box-shadow:0 0 2.5px #5ac0e8"></div><div class="a" style="left:134.1px;top:118.10000000000001px;width:12.6px;height:12.6px;border-radius:50%;background:radial-gradient(ellipse 26% 32% at 50% 55%,#a87050 0 90%,rgba(0,0,0,0) 100%),radial-gradient(ellipse 38% 42% at 50% 48%,#2a1a10 0 88%,rgba(0,0,0,0) 100%),linear-gradient(180deg,#a8c0d0,#6a8aa0);border:1px solid #a8e4f4;box-shadow:0 0 2.5px #5ac0e8"></div><div class="a" style="left:178.7px;top:118.10000000000001px;width:12.6px;height:12.6px;border-radius:50%;background:radial-gradient(ellipse 26% 32% at 50% 55%,#f0c0a0 0 90%,rgba(0,0,0,0) 100%),radial-gradient(ellipse 38% 42% at 50% 48%,#d89050 0 88%,rgba(0,0,0,0) 100%),linear-gradient(180deg,#a8c0d0,#6a8aa0);border:1px solid #a8e4f4;box-shadow:0 0 2.5px #5ac0e8"></div><div class="a" style="left:139.39999999999998px;top:132.5px;width:12.6px;height:12.6px;border-radius:50%;background:radial-gradient(ellipse 26% 32% at 50% 55%,#f0c090 0 90%,rgba(0,0,0,0) 100%),radial-gradient(ellipse 38% 42% at 50% 48%,#c89048 0 88%,rgba(0,0,0,0) 100%),linear-gradient(180deg,#a8c0d0,#6a8aa0);border:1px solid #a8e4f4;box-shadow:0 0 2.5px #5ac0e8"></div><div class="a" style="left:174.7px;top:132.5px;width:12.6px;height:12.6px;border-radius:50%;background:radial-gradient(ellipse 26% 32% at 50% 55%,#7a4a30 0 90%,rgba(0,0,0,0) 100%),radial-gradient(ellipse 38% 42% at 50% 48%,#1a1210 0 88%,rgba(0,0,0,0) 100%),linear-gradient(180deg,#a8c0d0,#6a8aa0);border:1px solid #a8e4f4;box-shadow:0 0 2.5px #5ac0e8"></div><div class="a" style="left:151px;top:113px;width:23.5px;height:23px;border-radius:50%;background:radial-gradient(circle, rgba(80,190,240,.75) 0%, rgba(40,130,210,.45) 45%, rgba(40,130,210,0) 72%)"></div><svg class="a" style="left:132px;top:104px" width="60" height="42" viewBox="0 0 60 42"><path d="M24 14.5h12v12H24zM26 12v2.5M29 12v2.5M32 12v2.5M35 12v2.5M26 26.5V29M29 26.5V29M32 26.5V29M35 26.5V29M21.5 17h2.5M21.5 20.5h2.5M21.5 24h2.5M36 17h2.5M36 20.5h2.5M36 24h2.5" stroke="#7ad8f8" stroke-width=".7" fill="rgba(20,80,150,.6)"/><path d="M19 4.5a5 5 0 0 1 0 7M21.5 3a8 8 0 0 1 0 10M41 4.5a5 5 0 0 0 0 7M38.5 3a8 8 0 0 0 0 10M19 30.5a5 5 0 0 1 0 7M21.5 29a8 8 0 0 1 0 10M41 30.5a5 5 0 0 0 0 7M38.5 29a8 8 0 0 0 0 10M15 20.5h5M40 20.5h5M18 13l4 3M42 13l-4 3M18 28l4-3M42 28l-4-3" stroke="#5ac4ec" stroke-width=".8" fill="none" opacity=".85"/><text x="30" y="23" font-size="6" font-weight="bold" fill="#c8f2ff" text-anchor="middle" font-family="Liberation Sans">AI</text></svg><div class="a" style="left:131.3px;top:166.3px;width:26.2px;height:36px;border-radius:2px;overflow:hidden;border:.8px solid #6a8aa8;filter:grayscale(.75) hue-rotate(150deg)"><svg width="26.2" height="36" viewBox="0 0 144 140" preserveAspectRatio="none">
<defs>
<linearGradient id="bgmf1" x1="0" y1="0" x2="1" y2="0.6"><stop offset="0" stop-color="#8a7a58"/><stop offset=".3" stop-color="#4e5a40"/><stop offset=".65" stop-color="#34482e"/><stop offset="1" stop-color="#2c3e2a"/></linearGradient>
<radialGradient id="glmf1" cx=".1" cy=".15" r=".5"><stop offset="0" stop-color="#e8c078" stop-opacity=".9"/><stop offset=".55" stop-color="#b08048" stop-opacity=".35"/><stop offset="1" stop-color="#b08048" stop-opacity="0"/></radialGradient>
<radialGradient id="fcmf1" cx=".38" cy=".42" r=".65"><stop offset="0" stop-color="#f4ccae"/><stop offset=".6" stop-color="#e4b090"/><stop offset="1" stop-color="#c08466"/></radialGradient>
<linearGradient id="shmf1" x1="0" y1="0" x2="1" y2="0"><stop offset="0" stop-color="#c8c6c4"/><stop offset=".5" stop-color="#e2dfdc"/><stop offset="1" stop-color="#cfccca"/></linearGradient>
<filter id="b1mf1" x="-20%" y="-20%" width="140%" height="140%"><feGaussianBlur stdDeviation="0.9"/></filter>
<filter id="b2mf1" x="-40%" y="-40%" width="180%" height="180%"><feGaussianBlur stdDeviation="3.5"/></filter>
</defs>
<rect width="144" height="140" fill="url(#bgmf1)"/>
<rect width="144" height="140" fill="url(#glmf1)"/>
<circle cx="42" cy="3" r="7" fill="#f0e0b0" opacity=".7" filter="url(#b2mf1)"/>
<circle cx="128" cy="28" r="14" fill="#5a7a48" opacity=".6" filter="url(#b2mf1)"/>
<circle cx="125" cy="75" r="12" fill="#48663a" opacity=".5" filter="url(#b2mf1)"/>
<circle cx="8" cy="105" r="14" fill="#5a7a70" opacity=".5" filter="url(#b2mf1)"/>
<path d="M40 24 Q22 56 14 94 Q9 118 14 140 L30 140 Q26 110 32 80 Q38 52 50 26Z" fill="#f08024" opacity=".95" filter="url(#b2mf1)"/>
<path d="M110 40 Q121 64 116 90 L106 92 Q112 66 104 44Z" fill="#e87020" opacity=".9" filter="url(#b2mf1)"/>
<path d="M0 140 L6 112 Q12 104 24 104 L26 140Z" fill="url(#shmf1)" filter="url(#b1mf1)"/>
<path d="M62 76 L62 112 Q80 122 100 104 L92 76Z" fill="#c98e70" filter="url(#b1mf1)"/>
<path d="M96 98 Q120 90 144 94 L144 140 L60 140 Q58 124 62 116 Q82 124 96 98Z" fill="url(#shmf1)" filter="url(#b1mf1)"/>
<path d="M76 6 Q99 8 108 34 Q115 60 111 86 Q104 93 98 92 Q102 70 100 48 Q92 28 76 24 Q58 30 54 52 Q53 74 62 96 Q64 120 66 140 L22 140 Q17 116 22 96 Q28 60 39 33 Q52 8 76 6Z" fill="#2c1a14" filter="url(#b1mf1)"/>
<path d="M32 50 Q24 76 22 100 Q21 116 24 128" stroke="#d86a1c" stroke-width="3" fill="none" opacity=".9" filter="url(#b1mf1)"/>
<ellipse cx="78.5" cy="54" rx="25.5" ry="32" fill="url(#fcmf1)" filter="url(#b1mf1)"/>
<path d="M78 18 Q100 20 107 45 Q108 57 106 66 Q103 46 94 34 Q86 26 78 24Z" fill="#2c1a14" filter="url(#b1mf1)"/>
<path d="M52 46 Q54 26 72 19 L62 28 Q55 36 54.5 55Z" fill="#2c1a14" filter="url(#b1mf1)"/>
<path d="M61 46 Q66 43 71 46M83 45 Q88.5 42 94 45" stroke="#2a1410" stroke-width="2" fill="none" filter="url(#b1mf1)"/>
<path d="M77 49 Q75 58 73 62 Q77 64 81 62" stroke="#b07860" stroke-width="1" fill="none" filter="url(#b1mf1)"/>
<path d="M59 40 Q65 37 71 39M83 39 Q89 36 95 39" stroke="#3a2018" stroke-width="1.2" fill="none" filter="url(#b1mf1)"/><path d="M70 71 Q77 74 85 71" stroke="#b0605a" stroke-width="2.4" fill="none" filter="url(#b1mf1)"/>
</svg></div><div class="a" style="left:160.9px;top:166.3px;width:26.2px;height:36px;border-radius:2px;overflow:hidden;border:.8px solid #6a8aa8"><svg width="26.2" height="36" viewBox="0 0 144 140" preserveAspectRatio="none">
<defs>
<linearGradient id="bgmf2" x1="0" y1="0" x2="1" y2="0.6"><stop offset="0" stop-color="#8a7a58"/><stop offset=".3" stop-color="#4e5a40"/><stop offset=".65" stop-color="#34482e"/><stop offset="1" stop-color="#2c3e2a"/></linearGradient>
<radialGradient id="glmf2" cx=".1" cy=".15" r=".5"><stop offset="0" stop-color="#e8c078" stop-opacity=".9"/><stop offset=".55" stop-color="#b08048" stop-opacity=".35"/><stop offset="1" stop-color="#b08048" stop-opacity="0"/></radialGradient>
<radialGradient id="fcmf2" cx=".38" cy=".42" r=".65"><stop offset="0" stop-color="#f4ccae"/><stop offset=".6" stop-color="#e4b090"/><stop offset="1" stop-color="#c08466"/></radialGradient>
<linearGradient id="shmf2" x1="0" y1="0" x2="1" y2="0"><stop offset="0" stop-color="#c8c6c4"/><stop offset=".5" stop-color="#e2dfdc"/><stop offset="1" stop-color="#cfccca"/></linearGradient>
<filter id="b1mf2" x="-20%" y="-20%" width="140%" height="140%"><feGaussianBlur stdDeviation="0.9"/></filter>
<filter id="b2mf2" x="-40%" y="-40%" width="180%" height="180%"><feGaussianBlur stdDeviation="3.5"/></filter>
</defs>
<rect width="144" height="140" fill="url(#bgmf2)"/>
<rect width="144" height="140" fill="url(#glmf2)"/>
<circle cx="42" cy="3" r="7" fill="#f0e0b0" opacity=".7" filter="url(#b2mf2)"/>
<circle cx="128" cy="28" r="14" fill="#5a7a48" opacity=".6" filter="url(#b2mf2)"/>
<circle cx="125" cy="75" r="12" fill="#48663a" opacity=".5" filter="url(#b2mf2)"/>
<circle cx="8" cy="105" r="14" fill="#5a7a70" opacity=".5" filter="url(#b2mf2)"/>
<path d="M40 24 Q22 56 14 94 Q9 118 14 140 L30 140 Q26 110 32 80 Q38 52 50 26Z" fill="#f08024" opacity=".95" filter="url(#b2mf2)"/>
<path d="M110 40 Q121 64 116 90 L106 92 Q112 66 104 44Z" fill="#e87020" opacity=".9" filter="url(#b2mf2)"/>
<path d="M0 140 L6 112 Q12 104 24 104 L26 140Z" fill="url(#shmf2)" filter="url(#b1mf2)"/>
<path d="M62 76 L62 112 Q80 122 100 104 L92 76Z" fill="#c98e70" filter="url(#b1mf2)"/>
<path d="M96 98 Q120 90 144 94 L144 140 L60 140 Q58 124 62 116 Q82 124 96 98Z" fill="url(#shmf2)" filter="url(#b1mf2)"/>
<path d="M76 6 Q99 8 108 34 Q115 60 111 86 Q104 93 98 92 Q102 70 100 48 Q92 28 76 24 Q58 30 54 52 Q53 74 62 96 Q64 120 66 140 L22 140 Q17 116 22 96 Q28 60 39 33 Q52 8 76 6Z" fill="#2c1a14" filter="url(#b1mf2)"/>
<path d="M32 50 Q24 76 22 100 Q21 116 24 128" stroke="#d86a1c" stroke-width="3" fill="none" opacity=".9" filter="url(#b1mf2)"/>
<ellipse cx="78.5" cy="54" rx="25.5" ry="32" fill="url(#fcmf2)" filter="url(#b1mf2)"/>
<path d="M78 18 Q100 20 107 45 Q108 57 106 66 Q103 46 94 34 Q86 26 78 24Z" fill="#2c1a14" filter="url(#b1mf2)"/>
<path d="M52 46 Q54 26 72 19 L62 28 Q55 36 54.5 55Z" fill="#2c1a14" filter="url(#b1mf2)"/>
<path d="M61 46 Q66 43 71 46M83 45 Q88.5 42 94 45" stroke="#2a1410" stroke-width="2" fill="none" filter="url(#b1mf2)"/>
<path d="M77 49 Q75 58 73 62 Q77 64 81 62" stroke="#b07860" stroke-width="1" fill="none" filter="url(#b1mf2)"/>
<path d="M59 40 Q65 37 71 39M83 39 Q89 36 95 39" stroke="#3a2018" stroke-width="1.2" fill="none" filter="url(#b1mf2)"/><path d="M70 71 Q77 74 85 71" stroke="#b0605a" stroke-width="2.4" fill="none" filter="url(#b1mf2)"/>
</svg></div><div class="a" style="left:154.8px;top:180.2px;width:9px;height:9px;border-radius:50%;background:#2aa8e8;box-shadow:0 0 3px #3ab8f0"></div><svg class="a" style="left:157.3px;top:182.2px" width="5" height="5" viewBox="0 0 5 5"><path d="M1 .5L4.5 2.5 1 4.5z" fill="#fff"/></svg><div class="a" style="left:181px;top:193.5px;width:11px;height:11px;border-radius:50%;background:#2a9be8;border:1px solid #fff"></div><svg class="a" style="left:183.3px;top:196px" width="6.5" height="6" viewBox="0 0 7 6"><path d="M1 3l1.8 1.8L6 1.2" stroke="#fff" stroke-width="1.2" fill="none"/></svg><div class="a" style="left:210px;top:40px;width:190px;height:180px;border-radius:30px;background:radial-gradient(ellipse at center, rgba(60,150,230,.35), rgba(60,150,230,0) 70%)"></div><svg class="a" style="left:0;top:0;overflow:visible" width="412" height="231" viewBox="0 0 412 231"><defs><filter id="gwm" x="-10%" y="-10%" width="120%" height="120%"><feGaussianBlur stdDeviation="1.8"/></filter></defs><path d="M229 53.4H270L276.7 48.7H337.7L344.4 53.4H378Q384.9 53.4 384.9 60V197Q384.9 204 378 204H365L359 209H253L247 204H228.7Q221.7 204 221.7 197V60Q221.7 53.4 229 53.4Z" fill="rgba(30,90,160,.3)" stroke="#5ab8f0" stroke-width="2" filter="url(#gwm)" opacity=".55"/><path d="M229 53.4H270L276.7 48.7H337.7L344.4 53.4H378Q384.9 53.4 384.9 60V197Q384.9 204 378 204H365L359 209H253L247 204H228.7Q221.7 204 221.7 197V60Q221.7 53.4 229 53.4Z" fill="none" stroke="#86c4e6" stroke-width=".9" opacity=".85"/><path d="M231 57H272L278 52.5H336L342 57H376Q381 57 381 62V195Q381 200.5 376 200.5H363L357.5 205H254.5L249 200.5H230.5Q225.5 200.5 225.5 195V62Q225.5 57 231 57Z" fill="none" stroke="rgba(140,210,245,.55)" stroke-width=".7"/><path d="M283 49.5H331" stroke="#c8f0ff" stroke-width="2" filter="url(#gwm)"/><path d="M285 49.2H329" stroke="#e0f8ff" stroke-width="1"/><path d="M270 207.5H330" stroke="#a8e4ff" stroke-width="1.6" filter="url(#gwm)"/></svg><div class="a" style="left:231.5px;top:59.7px;width:143.5px;height:140.4px;overflow:hidden;border-radius:2px;box-shadow:0 0 4px rgba(120,200,240,.6)"><svg width="143.5" height="140.4" viewBox="0 0 144 140" preserveAspectRatio="none">
<defs>
<linearGradient id="bgmp" x1="0" y1="0" x2="1" y2="0.6"><stop offset="0" stop-color="#8a7a58"/><stop offset=".3" stop-color="#4e5a40"/><stop offset=".65" stop-color="#34482e"/><stop offset="1" stop-color="#2c3e2a"/></linearGradient>
<radialGradient id="glmp" cx=".1" cy=".15" r=".5"><stop offset="0" stop-color="#e8c078" stop-opacity=".9"/><stop offset=".55" stop-color="#b08048" stop-opacity=".35"/><stop offset="1" stop-color="#b08048" stop-opacity="0"/></radialGradient>
<radialGradient id="fcmp" cx=".38" cy=".42" r=".65"><stop offset="0" stop-color="#f4ccae"/><stop offset=".6" stop-color="#e4b090"/><stop offset="1" stop-color="#c08466"/></radialGradient>
<linearGradient id="shmp" x1="0" y1="0" x2="1" y2="0"><stop offset="0" stop-color="#c8c6c4"/><stop offset=".5" stop-color="#e2dfdc"/><stop offset="1" stop-color="#cfccca"/></linearGradient>
<filter id="b1mp" x="-20%" y="-20%" width="140%" height="140%"><feGaussianBlur stdDeviation="0.9"/></filter>
<filter id="b2mp" x="-40%" y="-40%" width="180%" height="180%"><feGaussianBlur stdDeviation="3.5"/></filter>
</defs>
<rect width="144" height="140" fill="url(#bgmp)"/>
<rect width="144" height="140" fill="url(#glmp)"/>
<circle cx="42" cy="3" r="7" fill="#f0e0b0" opacity=".7" filter="url(#b2mp)"/>
<circle cx="128" cy="28" r="14" fill="#5a7a48" opacity=".6" filter="url(#b2mp)"/>
<circle cx="125" cy="75" r="12" fill="#48663a" opacity=".5" filter="url(#b2mp)"/>
<circle cx="8" cy="105" r="14" fill="#5a7a70" opacity=".5" filter="url(#b2mp)"/>
<path d="M40 24 Q22 56 14 94 Q9 118 14 140 L30 140 Q26 110 32 80 Q38 52 50 26Z" fill="#f08024" opacity=".95" filter="url(#b2mp)"/>
<path d="M110 40 Q121 64 116 90 L106 92 Q112 66 104 44Z" fill="#e87020" opacity=".9" filter="url(#b2mp)"/>
<path d="M0 140 L6 112 Q12 104 24 104 L26 140Z" fill="url(#shmp)" filter="url(#b1mp)"/>
<path d="M62 76 L62 112 Q80 122 100 104 L92 76Z" fill="#c98e70" filter="url(#b1mp)"/>
<path d="M96 98 Q120 90 144 94 L144 140 L60 140 Q58 124 62 116 Q82 124 96 98Z" fill="url(#shmp)" filter="url(#b1mp)"/>
<path d="M76 6 Q99 8 108 34 Q115 60 111 86 Q104 93 98 92 Q102 70 100 48 Q92 28 76 24 Q58 30 54 52 Q53 74 62 96 Q64 120 66 140 L22 140 Q17 116 22 96 Q28 60 39 33 Q52 8 76 6Z" fill="#2c1a14" filter="url(#b1mp)"/>
<path d="M32 50 Q24 76 22 100 Q21 116 24 128" stroke="#d86a1c" stroke-width="3" fill="none" opacity=".9" filter="url(#b1mp)"/>
<ellipse cx="78.5" cy="54" rx="25.5" ry="32" fill="url(#fcmp)" filter="url(#b1mp)"/>
<path d="M78 18 Q100 20 107 45 Q108 57 106 66 Q103 46 94 34 Q86 26 78 24Z" fill="#2c1a14" filter="url(#b1mp)"/>
<path d="M52 46 Q54 26 72 19 L62 28 Q55 36 54.5 55Z" fill="#2c1a14" filter="url(#b1mp)"/>
<path d="M61 46 Q66 43 71 46M83 45 Q88.5 42 94 45" stroke="#2a1410" stroke-width="2" fill="none" filter="url(#b1mp)"/>
<path d="M77 49 Q75 58 73 62 Q77 64 81 62" stroke="#b07860" stroke-width="1" fill="none" filter="url(#b1mp)"/>
<path d="M59 40 Q65 37 71 39M83 39 Q89 36 95 39" stroke="#3a2018" stroke-width="1.2" fill="none" filter="url(#b1mp)"/><path d="M70 71 Q77 74 85 71" stroke="#b0605a" stroke-width="2.4" fill="none" filter="url(#b1mp)"/>
</svg></div><svg class="a" style="left:231.5px;top:59.7px" width="143.5" height="140.4" viewBox="0 0 143.5 140.4" fill="none" stroke="rgba(190,235,255,.6)" stroke-width=".8"><path d="M4 24V4H28M115 4H139V24M139 116V136H115M28 136H4V116"/><path d="M6 6H22" stroke="rgba(220,245,255,.7)"/></svg><div class="a nw" style="left:237px;top:65px;font-size:6.5px;color:#e8f4ff;line-height:8px;font-weight:bold">AI</div><div class="a" style="left:247px;top:99px;width:2px;height:2px;border-radius:50%;background:#d8f6ff;box-shadow:0 0 2.5px 1px rgba(120,210,255,.75)"></div><div class="a" style="left:242.5px;top:116.5px;width:3.0px;height:3.0px;border-radius:50%;background:#d8f6ff;box-shadow:0 0 3.75px 1.5px rgba(120,210,255,.75)"></div><div class="a" style="left:236px;top:174px;width:2px;height:2px;border-radius:50%;background:#d8f6ff;box-shadow:0 0 2.5px 1px rgba(120,210,255,.75)"></div><div class="a" style="left:218px;top:149px;width:2px;height:2px;border-radius:50%;background:#d8f6ff;box-shadow:0 0 2.5px 1px rgba(120,210,255,.75)"></div><div class="a" style="left:214px;top:195px;width:2px;height:2px;border-radius:50%;background:#d8f6ff;box-shadow:0 0 2.5px 1px rgba(120,210,255,.75)"></div><div class="a" style="left:388.4px;top:116.4px;width:3.2px;height:3.2px;border-radius:50%;background:#d8f6ff;box-shadow:0 0 4.0px 1.6px rgba(120,210,255,.75)"></div><div class="a" style="left:392px;top:138px;width:2px;height:2px;border-radius:50%;background:#d8f6ff;box-shadow:0 0 2.5px 1px rgba(120,210,255,.75)"></div><div class="a" style="left:385px;top:171px;width:2px;height:2px;border-radius:50%;background:#d8f6ff;box-shadow:0 0 2.5px 1px rgba(120,210,255,.75)"></div><div class="a" style="left:397px;top:103px;width:2px;height:2px;border-radius:50%;background:#d8f6ff;box-shadow:0 0 2.5px 1px rgba(120,210,255,.75)"></div><div class="a" style="left:371px;top:65px;width:2px;height:2px;border-radius:50%;background:#d8f6ff;box-shadow:0 0 2.5px 1px rgba(120,210,255,.75)"></div><div class="a" style="left:298.8px;top:53.8px;width:2.4px;height:2.4px;border-radius:50%;background:#d8f6ff;box-shadow:0 0 3.0px 1.2px rgba(120,210,255,.75)"></div><div class="a" style="left:339px;top:40px;width:2px;height:2px;border-radius:50%;background:#d8f6ff;box-shadow:0 0 2.5px 1px rgba(120,210,255,.75)"></div><div class="a" style="left:235px;top:85px;width:2px;height:2px;border-radius:50%;background:#d8f6ff;box-shadow:0 0 2.5px 1px rgba(120,210,255,.75)"></div><div class="a" style="left:363px;top:111px;width:2px;height:2px;border-radius:50%;background:#d8f6ff;box-shadow:0 0 2.5px 1px rgba(120,210,255,.75)"></div><div class="a" style="left:366.7px;top:187.7px;width:2.6px;height:2.6px;border-radius:50%;background:#d8f6ff;box-shadow:0 0 3.25px 1.3px rgba(120,210,255,.75)"></div><div class="a" style="left:232px;top:193px;width:2px;height:2px;border-radius:50%;background:#d8f6ff;box-shadow:0 0 2.5px 1px rgba(120,210,255,.75)"></div><div class="a" style="left:225px;top:119px;width:2px;height:2px;border-radius:50%;background:#d8f6ff;box-shadow:0 0 2.5px 1px rgba(120,210,255,.75)"></div><div class="a" style="left:354.5px;top:116.5px;width:3.0px;height:3.0px;border-radius:50%;background:#d8f6ff;box-shadow:0 0 3.75px 1.5px rgba(120,210,255,.75)"></div><div class="a" style="left:359.8px;top:175.8px;width:2.4px;height:2.4px;border-radius:50%;background:#d8f6ff;box-shadow:0 0 3.0px 1.2px rgba(120,210,255,.75)"></div><div class="a" style="left:263px;top:185px;width:2px;height:2px;border-radius:50%;background:#d8f6ff;box-shadow:0 0 2.5px 1px rgba(120,210,255,.75)"></div><div class="a" style="left:279px;top:199px;width:2px;height:2px;border-radius:50%;background:#d8f6ff;box-shadow:0 0 2.5px 1px rgba(120,210,255,.75)"></div><div class="a" style="left:253.8px;top:162.8px;width:2.4px;height:2.4px;border-radius:50%;background:#d8f6ff;box-shadow:0 0 3.0px 1.2px rgba(120,210,255,.75)"></div><div class="a" style="left:348.5px;top:193.5px;width:3.0px;height:3.0px;border-radius:50%;background:#d8f6ff;box-shadow:0 0 3.75px 1.5px rgba(120,210,255,.75)"></div><div class="a" style="left:379px;top:99px;width:2px;height:2px;border-radius:50%;background:#d8f6ff;box-shadow:0 0 2.5px 1px rgba(120,210,255,.75)"></div><div class="a" style="left:207px;top:169px;width:2px;height:2px;border-radius:50%;background:#d8f6ff;box-shadow:0 0 2.5px 1px rgba(120,210,255,.75)"></div><div class="a" style="left:393.8px;top:156.8px;width:2.4px;height:2.4px;border-radius:50%;background:#d8f6ff;box-shadow:0 0 3.0px 1.2px rgba(120,210,255,.75)"></div></div>
<div class="a" style="left:0;top:0;width:412px;height:232px;border:2px solid #1a6fe4;border-radius:8px 8px 0 0"></div>
<div class="a nw" style="left:8px;top:246.5px;font-size:10px;letter-spacing:-.05px;color:#444746;line-height:13px;-webkit-text-stroke:.15px #444746">スライドのプレビュー</div>
<div class="a nw" style="left:114px;top:248px;width:39.5px;height:11px;background:#d3e3fd;color:#0b57d0;font-size:8.5px;line-height:11px;text-align:center;border-radius:2px">ベータ版</div>
</div>
<div class="a" style="left:513px;top:341px;width:97px;height:27.5px;border-radius:14px;background:#0b57d0"></div>
<div class="a" style="left:586.5px;top:341px;width:1px;height:27.5px;background:#6a97e0"></div>
<div class="a nw" style="left:525px;top:347.5px;font-size:10px;color:#fff;line-height:14px;-webkit-text-stroke:.35px #fff">置き換える</div>
<svg class="a" style="left:594px;top:352.5px" width="7" height="4" viewBox="0 0 7 4"><path d="M0 0h7L3.5 4z" fill="#fff"/></svg>
<svg class="a" style="left:625.5px;top:349.5px" width="11" height="11" viewBox="0 0 11 11"><path d="M1 1l9 9M10 1l-9 9" stroke="#444746" stroke-width="1.6"/></svg><!-- bottom -->
<div class="a" style="left:344px;top:448.3px;width:208.6px;height:27.4px;border-radius:14px;background:#eef0f4"></div>
<svg class="a" style="left:356.5px;top:456.5px" width="9.62" height="11" viewBox="0 0 14 16"><defs><linearGradient id="bn356.5" x1="0" y1="1" x2="1" y2="0"><stop offset="0" stop-color="#f29a0e"/><stop offset="1" stop-color="#f7b52c"/></linearGradient></defs><path d="M5.2 1.2 Q9.6 2.8 9.8 9 L6 9.6 Q3.6 6 5.2 1.2Z" fill="#fbd888"/><path d="M0.8 15.2 Q0 10.6 3.8 8.6 L9.6 8.6 Q10.8 12.4 7.2 14.6 Q3.6 16.2 0.8 15.2Z" fill="url(#bn356.5)"/><path d="M9.2 8.4 Q12.8 9.8 12 13.2 Q10.6 14.4 8.8 13.6 Q10.4 11 9.2 8.4Z" fill="#f5cf7c"/><circle cx="11.6" cy="3.4" r="1.9" fill="#f9ab00"/></svg>
<div class="a nw" style="left:375.7px;top:455px;font-size:10px;color:#1f1f1f;line-height:13px;-webkit-text-stroke:.25px #1f1f1f">このスライドの見栄えを良くする</div>
<svg class="a" style="left:534px;top:457px" width="9.5" height="9.5" viewBox="0 0 10 10"><path d="M1 1l8 8M9 1L1 9" stroke="#1f1f1f" stroke-width="1.5"/></svg>
<div class="a" style="left:431px;top:484px;width:34.5px;height:2px;background:#747775;border-radius:1px"></div>
<div class="a" style="left:168px;top:500px;width:560px;height:40px;border-radius:8px;background:#eef2f8"></div>
<div class="a nw" style="left:180px;top:508px;font-size:10px;letter-spacing:.36px;color:#1f1f1f;line-height:13px;-webkit-text-stroke:.2px #1f1f1f">クリックするとスピーカー ノートを追加できます</div><!-- right panel -->
<div class="a" style="left:739px;top:0;width:229px;height:528px;background:#f0f4f9;border-radius:0 0 12px 12px"></div>
<svg class="a" style="left:751px;top:7.5px" width="14.00" height="16" viewBox="0 0 14 16"><defs><linearGradient id="bn751" x1="0" y1="1" x2="1" y2="0"><stop offset="0" stop-color="#f29a0e"/><stop offset="1" stop-color="#f7b52c"/></linearGradient></defs><path d="M5.2 1.2 Q9.6 2.8 9.8 9 L6 9.6 Q3.6 6 5.2 1.2Z" fill="#fbd888"/><path d="M0.8 15.2 Q0 10.6 3.8 8.6 L9.6 8.6 Q10.8 12.4 7.2 14.6 Q3.6 16.2 0.8 15.2Z" fill="url(#bn751)"/><path d="M9.2 8.4 Q12.8 9.8 12 13.2 Q10.6 14.4 8.8 13.6 Q10.4 11 9.2 8.4Z" fill="#f5cf7c"/><circle cx="11.6" cy="3.4" r="1.9" fill="#f9ab00"/></svg>
<div class="a nw" style="left:780px;top:8.5px;font-size:11px;letter-spacing:.45px;color:#1f1f1f;line-height:15px;-webkit-text-stroke:.3px #1f1f1f">画像作成サポート</div>
<svg class="a" style="left:903.5px;top:9.3px;overflow:visible" width="14" height="13" viewBox="0 0 14 13" fill="none" stroke="#444746" stroke-width="1.5"><path d="M1.9 4.4A5.2 5.2 0 0 1 11.4 8.3"/><path d="M7.4 11.6A5.2 5.2 0 0 1 1.5 7.9"/><path d="M0.1 2.4L0.4 6.4 4.1 5Z" fill="#444746" stroke="none"/><path d="M6.3 3.9V7.3" stroke-width="1.3"/><path d="M9.9 9.1L12.9 12.1M12.9 9.1L9.9 12.1" stroke-width="1.4"/></svg>
<svg class="a" style="left:939.5px;top:9.5px" width="12" height="12" viewBox="0 0 12 12"><path d="M1 1l10 10M11 1L1 11" stroke="#444746" stroke-width="1.6"/></svg>
<svg class="a" style="left:751.5px;top:38.5px" width="15" height="15" viewBox="0 0 24 24"><path d="M12 0 C12.8 6.5 17.5 11.2 24 12 C17.5 12.8 12.8 17.5 12 24 C11.2 17.5 6.5 12.8 0 12 C6.5 11.2 11.2 6.5 12 0Z" fill="#3a7ff0"/></svg>
<div class="a nw" style="left:751px;top:60px;font-size:10px;color:#444746;line-height:13px">このスライドの見栄えを良くする</div>
<div class="a" style="left:752px;top:79px;width:199.3px;height:110.7px;border-radius:4px;overflow:hidden;background:#000">
<div class="a" style="left:0;top:0;width:412px;height:231px;transform-origin:0 0;transform:scale(0.4838,0.4792)"><div class="a" style="left:0;top:0;width:412px;height:231px;overflow:hidden;background:
radial-gradient(ellipse 150px 130px at 305px 125px, rgba(40,120,200,.55), rgba(20,80,160,0) 100%),
radial-gradient(ellipse 260px 160px at 330px 110px, rgba(20,70,140,.6), rgba(10,40,90,0) 100%),
linear-gradient(180deg,#06132b 0%,#081a38 55%,#041026 85%,#020918 100%)"><svg class="a" style="left:0;top:0" width="412" height="231" viewBox="0 0 412 231"><path d="M215 0V30l-6 6V52 M215 231V195l-6 -6V194 M229 0V37l-6 6V51 M229 231V197l-6 -6V187 M243 0V26l-6 6V42 M243 231V202l6 -6V194 M257 0V27l-6 6V53 M257 231V214l-6 -6V192 M271 0V40l-6 6V52 M271 231V214l-6 -6V195 M285 0V37l-6 6V49 M285 231V202l-6 -6V187 M299 0V23l6 6V45 M299 231V212l-6 -6V190 M313 0V23l-6 6V41 M313 231V196l-6 -6V188 M327 0V41l6 6V50 M327 231V201l6 -6V190 M341 0V29l-6 6V45 M341 231V208l-6 -6V186 M355 0V29l6 6V50 M355 231V201l6 -6V186 M369 0V22l-6 6V53 M369 231V210l6 -6V193 M383 0V35l6 6V41 M383 231V213l6 -6V190 M397 0V42l6 6V55 M397 231V197l6 -6V194 M412 60H394l-6 6H380 M200 60H216l6 6H222 M412 76H388l-6 6H380 M200 76H213l6 6H222 M412 92H395l-6 6H380 M200 92H216l6 6H222 M412 108H388l-6 6H380 M200 108H216l6 6H222 M412 124H389l-6 6H380 M200 124H217l6 6H222 M412 140H395l-6 6H380 M200 140H219l6 6H222 M412 156H390l-6 6H380 M200 156H214l6 6H222 M412 172H394l-6 6H380 M200 172H219l6 6H222 M412 188H395l-6 6H380 M200 188H215l6 6H222" stroke="#3f8fd0" stroke-width=".6" fill="none" opacity=".22"/></svg><div class="a nw" style="left:14px;top:20px;font-size:14px;font-weight:bold;line-height:18px;filter:drop-shadow(0 0 2px rgba(90,220,235,.9)) drop-shadow(0 0 4px rgba(90,220,235,.45))"><span style="background:linear-gradient(90deg,#4edaf2 0%,#62e0ec 40%,#9ae8c8 68%,#e8e070 80%,#f6d860 100%);-webkit-background-clip:text;background-clip:text;color:transparent;-webkit-text-stroke:.2px transparent"><span style="margin-right:-3.5px">「</span>優れたTalker<span style="margin-left:-3px;margin-right:-3.5px">」</span>の定義</span></div><div class="a nw" style="left:21.3px;top:58.2px;font-size:6.4px;font-weight:bold;color:#f0f2f5;line-height:9px">Who is a better Talker?</div><div class="a nw" style="left:21px;top:67.5px;font-size:12px;color:#c8d0da;line-height:18px;transform:scale(.5);transform-origin:0 0">この問いに答えるため、2つの重要な側面から能力を評価する。</div><div class="a" style="left:21.2px;top:99.5px;width:174.5px;height:52px;border:1.2px solid #2fa8d8;border-radius:4px;background:rgba(6,30,58,.85);box-shadow:0 0 4px rgba(40,170,230,.8),inset 0 0 5px rgba(40,170,230,.4)"></div><div class="a nw" style="left:28.6px;top:105.1px;font-size:7.1px;font-weight:bold;color:#f2c24a;line-height:9px;text-shadow:0 0 2px rgba(240,190,60,.5)">A) 汎用性 (Generalization)</div><div class="a nw" style="left:28.6px;top:119.7px;font-size:10.8px;color:#d5dce4;line-height:14px;-webkit-text-stroke:.3px #d5dce4;transform:scale(.5);transform-origin:0 0">多種多様な人物画像に対して、安定して</div><div class="a nw" style="left:28.6px;top:131.7px;font-size:10.8px;color:#d5dce4;line-height:14px;-webkit-text-stroke:.3px #d5dce4;transform:scale(.5);transform-origin:0 0">高品質なAGTHを生成できる能力。</div><div class="a" style="left:21.2px;top:157.7px;width:174.5px;height:52px;border:1.2px solid #2fa8d8;border-radius:4px;background:rgba(6,30,58,.85);box-shadow:0 0 4px rgba(40,170,230,.8),inset 0 0 5px rgba(40,170,230,.4)"></div><div class="a nw" style="left:28.6px;top:163.29999999999998px;font-size:7.1px;font-weight:bold;color:#f2c24a;line-height:9px;text-shadow:0 0 2px rgba(240,190,60,.5)">B) 品質の高さ (Quality)</div><div class="a nw" style="left:28.6px;top:177.89999999999998px;font-size:10.8px;color:#d5dce4;line-height:14px;-webkit-text-stroke:.3px #d5dce4;transform:scale(.5);transform-origin:0 0">同じ入力に対して、他よりも優れた品質</div><div class="a nw" style="left:28.6px;top:189.89999999999998px;font-size:10.8px;color:#d5dce4;line-height:14px;-webkit-text-stroke:.3px #d5dce4;transform:scale(.5);transform-origin:0 0">(忠実度・自然さ)を生成する能力。</div><div class="a" style="left:139.39999999999998px;top:105.0px;width:12.6px;height:12.6px;border-radius:50%;background:radial-gradient(ellipse 26% 32% at 50% 55%,#e0b090 0 90%,rgba(0,0,0,0) 100%),radial-gradient(ellipse 38% 42% at 50% 48%,#4a3020 0 88%,rgba(0,0,0,0) 100%),linear-gradient(180deg,#a8c0d0,#6a8aa0);border:1px solid #a8e4f4;box-shadow:0 0 2.5px #5ac0e8"></div><div class="a" style="left:174.7px;top:105.0px;width:12.6px;height:12.6px;border-radius:50%;background:radial-gradient(ellipse 26% 32% at 50% 55%,#d8a080 0 90%,rgba(0,0,0,0) 100%),radial-gradient(ellipse 38% 42% at 50% 48%,#3a2a20 0 88%,rgba(0,0,0,0) 100%),linear-gradient(180deg,#a8c0d0,#6a8aa0);border:1px solid #a8e4f4;box-shadow:0 0 2.5px #5ac0e8"></div><div class="a" style="left:134.1px;top:118.10000000000001px;width:12.6px;height:12.6px;border-radius:50%;background:radial-gradient(ellipse 26% 32% at 50% 55%,#a87050 0 90%,rgba(0,0,0,0) 100%),radial-gradient(ellipse 38% 42% at 50% 48%,#2a1a10 0 88%,rgba(0,0,0,0) 100%),linear-gradient(180deg,#a8c0d0,#6a8aa0);border:1px solid #a8e4f4;box-shadow:0 0 2.5px #5ac0e8"></div><div class="a" style="left:178.7px;top:118.10000000000001px;width:12.6px;height:12.6px;border-radius:50%;background:radial-gradient(ellipse 26% 32% at 50% 55%,#f0c0a0 0 90%,rgba(0,0,0,0) 100%),radial-gradient(ellipse 38% 42% at 50% 48%,#d89050 0 88%,rgba(0,0,0,0) 100%),linear-gradient(180deg,#a8c0d0,#6a8aa0);border:1px solid #a8e4f4;box-shadow:0 0 2.5px #5ac0e8"></div><div class="a" style="left:139.39999999999998px;top:132.5px;width:12.6px;height:12.6px;border-radius:50%;background:radial-gradient(ellipse 26% 32% at 50% 55%,#f0c090 0 90%,rgba(0,0,0,0) 100%),radial-gradient(ellipse 38% 42% at 50% 48%,#c89048 0 88%,rgba(0,0,0,0) 100%),linear-gradient(180deg,#a8c0d0,#6a8aa0);border:1px solid #a8e4f4;box-shadow:0 0 2.5px #5ac0e8"></div><div class="a" style="left:174.7px;top:132.5px;width:12.6px;height:12.6px;border-radius:50%;background:radial-gradient(ellipse 26% 32% at 50% 55%,#7a4a30 0 90%,rgba(0,0,0,0) 100%),radial-gradient(ellipse 38% 42% at 50% 48%,#1a1210 0 88%,rgba(0,0,0,0) 100%),linear-gradient(180deg,#a8c0d0,#6a8aa0);border:1px solid #a8e4f4;box-shadow:0 0 2.5px #5ac0e8"></div><div class="a" style="left:151px;top:113px;width:23.5px;height:23px;border-radius:50%;background:radial-gradient(circle, rgba(80,190,240,.75) 0%, rgba(40,130,210,.45) 45%, rgba(40,130,210,0) 72%)"></div><svg class="a" style="left:132px;top:104px" width="60" height="42" viewBox="0 0 60 42"><path d="M24 14.5h12v12H24zM26 12v2.5M29 12v2.5M32 12v2.5M35 12v2.5M26 26.5V29M29 26.5V29M32 26.5V29M35 26.5V29M21.5 17h2.5M21.5 20.5h2.5M21.5 24h2.5M36 17h2.5M36 20.5h2.5M36 24h2.5" stroke="#7ad8f8" stroke-width=".7" fill="rgba(20,80,150,.6)"/><path d="M19 4.5a5 5 0 0 1 0 7M21.5 3a8 8 0 0 1 0 10M41 4.5a5 5 0 0 0 0 7M38.5 3a8 8 0 0 0 0 10M19 30.5a5 5 0 0 1 0 7M21.5 29a8 8 0 0 1 0 10M41 30.5a5 5 0 0 0 0 7M38.5 29a8 8 0 0 0 0 10M15 20.5h5M40 20.5h5M18 13l4 3M42 13l-4 3M18 28l4-3M42 28l-4-3" stroke="#5ac4ec" stroke-width=".8" fill="none" opacity=".85"/><text x="30" y="23" font-size="6" font-weight="bold" fill="#c8f2ff" text-anchor="middle" font-family="Liberation Sans">AI</text></svg><div class="a" style="left:131.3px;top:166.3px;width:26.2px;height:36px;border-radius:2px;overflow:hidden;border:.8px solid #6a8aa8;filter:grayscale(.75) hue-rotate(150deg)"><svg width="26.2" height="36" viewBox="0 0 144 140" preserveAspectRatio="none">
<defs>
<linearGradient id="bgtf1" x1="0" y1="0" x2="1" y2="0.6"><stop offset="0" stop-color="#8a7a58"/><stop offset=".3" stop-color="#4e5a40"/><stop offset=".65" stop-color="#34482e"/><stop offset="1" stop-color="#2c3e2a"/></linearGradient>
<radialGradient id="gltf1" cx=".1" cy=".15" r=".5"><stop offset="0" stop-color="#e8c078" stop-opacity=".9"/><stop offset=".55" stop-color="#b08048" stop-opacity=".35"/><stop offset="1" stop-color="#b08048" stop-opacity="0"/></radialGradient>
<radialGradient id="fctf1" cx=".38" cy=".42" r=".65"><stop offset="0" stop-color="#f4ccae"/><stop offset=".6" stop-color="#e4b090"/><stop offset="1" stop-color="#c08466"/></radialGradient>
<linearGradient id="shtf1" x1="0" y1="0" x2="1" y2="0"><stop offset="0" stop-color="#c8c6c4"/><stop offset=".5" stop-color="#e2dfdc"/><stop offset="1" stop-color="#cfccca"/></linearGradient>
<filter id="b1tf1" x="-20%" y="-20%" width="140%" height="140%"><feGaussianBlur stdDeviation="0.9"/></filter>
<filter id="b2tf1" x="-40%" y="-40%" width="180%" height="180%"><feGaussianBlur stdDeviation="3.5"/></filter>
</defs>
<rect width="144" height="140" fill="url(#bgtf1)"/>
<rect width="144" height="140" fill="url(#gltf1)"/>
<circle cx="42" cy="3" r="7" fill="#f0e0b0" opacity=".7" filter="url(#b2tf1)"/>
<circle cx="128" cy="28" r="14" fill="#5a7a48" opacity=".6" filter="url(#b2tf1)"/>
<circle cx="125" cy="75" r="12" fill="#48663a" opacity=".5" filter="url(#b2tf1)"/>
<circle cx="8" cy="105" r="14" fill="#5a7a70" opacity=".5" filter="url(#b2tf1)"/>
<path d="M40 24 Q22 56 14 94 Q9 118 14 140 L30 140 Q26 110 32 80 Q38 52 50 26Z" fill="#f08024" opacity=".95" filter="url(#b2tf1)"/>
<path d="M110 40 Q121 64 116 90 L106 92 Q112 66 104 44Z" fill="#e87020" opacity=".9" filter="url(#b2tf1)"/>
<path d="M0 140 L6 112 Q12 104 24 104 L26 140Z" fill="url(#shtf1)" filter="url(#b1tf1)"/>
<path d="M62 76 L62 112 Q80 122 100 104 L92 76Z" fill="#c98e70" filter="url(#b1tf1)"/>
<path d="M96 98 Q120 90 144 94 L144 140 L60 140 Q58 124 62 116 Q82 124 96 98Z" fill="url(#shtf1)" filter="url(#b1tf1)"/>
<path d="M76 6 Q99 8 108 34 Q115 60 111 86 Q104 93 98 92 Q102 70 100 48 Q92 28 76 24 Q58 30 54 52 Q53 74 62 96 Q64 120 66 140 L22 140 Q17 116 22 96 Q28 60 39 33 Q52 8 76 6Z" fill="#2c1a14" filter="url(#b1tf1)"/>
<path d="M32 50 Q24 76 22 100 Q21 116 24 128" stroke="#d86a1c" stroke-width="3" fill="none" opacity=".9" filter="url(#b1tf1)"/>
<ellipse cx="78.5" cy="54" rx="25.5" ry="32" fill="url(#fctf1)" filter="url(#b1tf1)"/>
<path d="M78 18 Q100 20 107 45 Q108 57 106 66 Q103 46 94 34 Q86 26 78 24Z" fill="#2c1a14" filter="url(#b1tf1)"/>
<path d="M52 46 Q54 26 72 19 L62 28 Q55 36 54.5 55Z" fill="#2c1a14" filter="url(#b1tf1)"/>
<path d="M61 46 Q66 43 71 46M83 45 Q88.5 42 94 45" stroke="#2a1410" stroke-width="2" fill="none" filter="url(#b1tf1)"/>
<path d="M77 49 Q75 58 73 62 Q77 64 81 62" stroke="#b07860" stroke-width="1" fill="none" filter="url(#b1tf1)"/>
<path d="M59 40 Q65 37 71 39M83 39 Q89 36 95 39" stroke="#3a2018" stroke-width="1.2" fill="none" filter="url(#b1tf1)"/><path d="M70 71 Q77 74 85 71" stroke="#b0605a" stroke-width="2.4" fill="none" filter="url(#b1tf1)"/>
</svg></div><div class="a" style="left:160.9px;top:166.3px;width:26.2px;height:36px;border-radius:2px;overflow:hidden;border:.8px solid #6a8aa8"><svg width="26.2" height="36" viewBox="0 0 144 140" preserveAspectRatio="none">
<defs>
<linearGradient id="bgtf2" x1="0" y1="0" x2="1" y2="0.6"><stop offset="0" stop-color="#8a7a58"/><stop offset=".3" stop-color="#4e5a40"/><stop offset=".65" stop-color="#34482e"/><stop offset="1" stop-color="#2c3e2a"/></linearGradient>
<radialGradient id="gltf2" cx=".1" cy=".15" r=".5"><stop offset="0" stop-color="#e8c078" stop-opacity=".9"/><stop offset=".55" stop-color="#b08048" stop-opacity=".35"/><stop offset="1" stop-color="#b08048" stop-opacity="0"/></radialGradient>
<radialGradient id="fctf2" cx=".38" cy=".42" r=".65"><stop offset="0" stop-color="#f4ccae"/><stop offset=".6" stop-color="#e4b090"/><stop offset="1" stop-color="#c08466"/></radialGradient>
<linearGradient id="shtf2" x1="0" y1="0" x2="1" y2="0"><stop offset="0" stop-color="#c8c6c4"/><stop offset=".5" stop-color="#e2dfdc"/><stop offset="1" stop-color="#cfccca"/></linearGradient>
<filter id="b1tf2" x="-20%" y="-20%" width="140%" height="140%"><feGaussianBlur stdDeviation="0.9"/></filter>
<filter id="b2tf2" x="-40%" y="-40%" width="180%" height="180%"><feGaussianBlur stdDeviation="3.5"/></filter>
</defs>
<rect width="144" height="140" fill="url(#bgtf2)"/>
<rect width="144" height="140" fill="url(#gltf2)"/>
<circle cx="42" cy="3" r="7" fill="#f0e0b0" opacity=".7" filter="url(#b2tf2)"/>
<circle cx="128" cy="28" r="14" fill="#5a7a48" opacity=".6" filter="url(#b2tf2)"/>
<circle cx="125" cy="75" r="12" fill="#48663a" opacity=".5" filter="url(#b2tf2)"/>
<circle cx="8" cy="105" r="14" fill="#5a7a70" opacity=".5" filter="url(#b2tf2)"/>
<path d="M40 24 Q22 56 14 94 Q9 118 14 140 L30 140 Q26 110 32 80 Q38 52 50 26Z" fill="#f08024" opacity=".95" filter="url(#b2tf2)"/>
<path d="M110 40 Q121 64 116 90 L106 92 Q112 66 104 44Z" fill="#e87020" opacity=".9" filter="url(#b2tf2)"/>
<path d="M0 140 L6 112 Q12 104 24 104 L26 140Z" fill="url(#shtf2)" filter="url(#b1tf2)"/>
<path d="M62 76 L62 112 Q80 122 100 104 L92 76Z" fill="#c98e70" filter="url(#b1tf2)"/>
<path d="M96 98 Q120 90 144 94 L144 140 L60 140 Q58 124 62 116 Q82 124 96 98Z" fill="url(#shtf2)" filter="url(#b1tf2)"/>
<path d="M76 6 Q99 8 108 34 Q115 60 111 86 Q104 93 98 92 Q102 70 100 48 Q92 28 76 24 Q58 30 54 52 Q53 74 62 96 Q64 120 66 140 L22 140 Q17 116 22 96 Q28 60 39 33 Q52 8 76 6Z" fill="#2c1a14" filter="url(#b1tf2)"/>
<path d="M32 50 Q24 76 22 100 Q21 116 24 128" stroke="#d86a1c" stroke-width="3" fill="none" opacity=".9" filter="url(#b1tf2)"/>
<ellipse cx="78.5" cy="54" rx="25.5" ry="32" fill="url(#fctf2)" filter="url(#b1tf2)"/>
<path d="M78 18 Q100 20 107 45 Q108 57 106 66 Q103 46 94 34 Q86 26 78 24Z" fill="#2c1a14" filter="url(#b1tf2)"/>
<path d="M52 46 Q54 26 72 19 L62 28 Q55 36 54.5 55Z" fill="#2c1a14" filter="url(#b1tf2)"/>
<path d="M61 46 Q66 43 71 46M83 45 Q88.5 42 94 45" stroke="#2a1410" stroke-width="2" fill="none" filter="url(#b1tf2)"/>
<path d="M77 49 Q75 58 73 62 Q77 64 81 62" stroke="#b07860" stroke-width="1" fill="none" filter="url(#b1tf2)"/>
<path d="M59 40 Q65 37 71 39M83 39 Q89 36 95 39" stroke="#3a2018" stroke-width="1.2" fill="none" filter="url(#b1tf2)"/><path d="M70 71 Q77 74 85 71" stroke="#b0605a" stroke-width="2.4" fill="none" filter="url(#b1tf2)"/>
</svg></div><div class="a" style="left:154.8px;top:180.2px;width:9px;height:9px;border-radius:50%;background:#2aa8e8;box-shadow:0 0 3px #3ab8f0"></div><svg class="a" style="left:157.3px;top:182.2px" width="5" height="5" viewBox="0 0 5 5"><path d="M1 .5L4.5 2.5 1 4.5z" fill="#fff"/></svg><div class="a" style="left:181px;top:193.5px;width:11px;height:11px;border-radius:50%;background:#2a9be8;border:1px solid #fff"></div><svg class="a" style="left:183.3px;top:196px" width="6.5" height="6" viewBox="0 0 7 6"><path d="M1 3l1.8 1.8L6 1.2" stroke="#fff" stroke-width="1.2" fill="none"/></svg><div class="a" style="left:210px;top:40px;width:190px;height:180px;border-radius:30px;background:radial-gradient(ellipse at center, rgba(60,150,230,.35), rgba(60,150,230,0) 70%)"></div><svg class="a" style="left:0;top:0;overflow:visible" width="412" height="231" viewBox="0 0 412 231"><defs><filter id="gwt" x="-10%" y="-10%" width="120%" height="120%"><feGaussianBlur stdDeviation="1.8"/></filter></defs><path d="M229 53.4H270L276.7 48.7H337.7L344.4 53.4H378Q384.9 53.4 384.9 60V197Q384.9 204 378 204H365L359 209H253L247 204H228.7Q221.7 204 221.7 197V60Q221.7 53.4 229 53.4Z" fill="rgba(30,90,160,.3)" stroke="#5ab8f0" stroke-width="2" filter="url(#gwt)" opacity=".55"/><path d="M229 53.4H270L276.7 48.7H337.7L344.4 53.4H378Q384.9 53.4 384.9 60V197Q384.9 204 378 204H365L359 209H253L247 204H228.7Q221.7 204 221.7 197V60Q221.7 53.4 229 53.4Z" fill="none" stroke="#86c4e6" stroke-width=".9" opacity=".85"/><path d="M231 57H272L278 52.5H336L342 57H376Q381 57 381 62V195Q381 200.5 376 200.5H363L357.5 205H254.5L249 200.5H230.5Q225.5 200.5 225.5 195V62Q225.5 57 231 57Z" fill="none" stroke="rgba(140,210,245,.55)" stroke-width=".7"/><path d="M283 49.5H331" stroke="#c8f0ff" stroke-width="2" filter="url(#gwt)"/><path d="M285 49.2H329" stroke="#e0f8ff" stroke-width="1"/><path d="M270 207.5H330" stroke="#a8e4ff" stroke-width="1.6" filter="url(#gwt)"/></svg><div class="a" style="left:231.5px;top:59.7px;width:143.5px;height:140.4px;overflow:hidden;border-radius:2px;box-shadow:0 0 4px rgba(120,200,240,.6)"><svg width="143.5" height="140.4" viewBox="0 0 144 140" preserveAspectRatio="none">
<defs>
<linearGradient id="bgtp" x1="0" y1="0" x2="1" y2="0.6"><stop offset="0" stop-color="#8a7a58"/><stop offset=".3" stop-color="#4e5a40"/><stop offset=".65" stop-color="#34482e"/><stop offset="1" stop-color="#2c3e2a"/></linearGradient>
<radialGradient id="gltp" cx=".1" cy=".15" r=".5"><stop offset="0" stop-color="#e8c078" stop-opacity=".9"/><stop offset=".55" stop-color="#b08048" stop-opacity=".35"/><stop offset="1" stop-color="#b08048" stop-opacity="0"/></radialGradient>
<radialGradient id="fctp" cx=".38" cy=".42" r=".65"><stop offset="0" stop-color="#f4ccae"/><stop offset=".6" stop-color="#e4b090"/><stop offset="1" stop-color="#c08466"/></radialGradient>
<linearGradient id="shtp" x1="0" y1="0" x2="1" y2="0"><stop offset="0" stop-color="#c8c6c4"/><stop offset=".5" stop-color="#e2dfdc"/><stop offset="1" stop-color="#cfccca"/></linearGradient>
<filter id="b1tp" x="-20%" y="-20%" width="140%" height="140%"><feGaussianBlur stdDeviation="0.9"/></filter>
<filter id="b2tp" x="-40%" y="-40%" width="180%" height="180%"><feGaussianBlur stdDeviation="3.5"/></filter>
</defs>
<rect width="144" height="140" fill="url(#bgtp)"/>
<rect width="144" height="140" fill="url(#gltp)"/>
<circle cx="42" cy="3" r="7" fill="#f0e0b0" opacity=".7" filter="url(#b2tp)"/>
<circle cx="128" cy="28" r="14" fill="#5a7a48" opacity=".6" filter="url(#b2tp)"/>
<circle cx="125" cy="75" r="12" fill="#48663a" opacity=".5" filter="url(#b2tp)"/>
<circle cx="8" cy="105" r="14" fill="#5a7a70" opacity=".5" filter="url(#b2tp)"/>
<path d="M40 24 Q22 56 14 94 Q9 118 14 140 L30 140 Q26 110 32 80 Q38 52 50 26Z" fill="#f08024" opacity=".95" filter="url(#b2tp)"/>
<path d="M110 40 Q121 64 116 90 L106 92 Q112 66 104 44Z" fill="#e87020" opacity=".9" filter="url(#b2tp)"/>
<path d="M0 140 L6 112 Q12 104 24 104 L26 140Z" fill="url(#shtp)" filter="url(#b1tp)"/>
<path d="M62 76 L62 112 Q80 122 100 104 L92 76Z" fill="#c98e70" filter="url(#b1tp)"/>
<path d="M96 98 Q120 90 144 94 L144 140 L60 140 Q58 124 62 116 Q82 124 96 98Z" fill="url(#shtp)" filter="url(#b1tp)"/>
<path d="M76 6 Q99 8 108 34 Q115 60 111 86 Q104 93 98 92 Q102 70 100 48 Q92 28 76 24 Q58 30 54 52 Q53 74 62 96 Q64 120 66 140 L22 140 Q17 116 22 96 Q28 60 39 33 Q52 8 76 6Z" fill="#2c1a14" filter="url(#b1tp)"/>
<path d="M32 50 Q24 76 22 100 Q21 116 24 128" stroke="#d86a1c" stroke-width="3" fill="none" opacity=".9" filter="url(#b1tp)"/>
<ellipse cx="78.5" cy="54" rx="25.5" ry="32" fill="url(#fctp)" filter="url(#b1tp)"/>
<path d="M78 18 Q100 20 107 45 Q108 57 106 66 Q103 46 94 34 Q86 26 78 24Z" fill="#2c1a14" filter="url(#b1tp)"/>
<path d="M52 46 Q54 26 72 19 L62 28 Q55 36 54.5 55Z" fill="#2c1a14" filter="url(#b1tp)"/>
<path d="M61 46 Q66 43 71 46M83 45 Q88.5 42 94 45" stroke="#2a1410" stroke-width="2" fill="none" filter="url(#b1tp)"/>
<path d="M77 49 Q75 58 73 62 Q77 64 81 62" stroke="#b07860" stroke-width="1" fill="none" filter="url(#b1tp)"/>
<path d="M59 40 Q65 37 71 39M83 39 Q89 36 95 39" stroke="#3a2018" stroke-width="1.2" fill="none" filter="url(#b1tp)"/><path d="M70 71 Q77 74 85 71" stroke="#b0605a" stroke-width="2.4" fill="none" filter="url(#b1tp)"/>
</svg></div><svg class="a" style="left:231.5px;top:59.7px" width="143.5" height="140.4" viewBox="0 0 143.5 140.4" fill="none" stroke="rgba(190,235,255,.6)" stroke-width=".8"><path d="M4 24V4H28M115 4H139V24M139 116V136H115M28 136H4V116"/><path d="M6 6H22" stroke="rgba(220,245,255,.7)"/></svg><div class="a nw" style="left:237px;top:65px;font-size:6.5px;color:#e8f4ff;line-height:8px;font-weight:bold">AI</div><div class="a" style="left:247px;top:99px;width:2px;height:2px;border-radius:50%;background:#d8f6ff;box-shadow:0 0 2.5px 1px rgba(120,210,255,.75)"></div><div class="a" style="left:242.5px;top:116.5px;width:3.0px;height:3.0px;border-radius:50%;background:#d8f6ff;box-shadow:0 0 3.75px 1.5px rgba(120,210,255,.75)"></div><div class="a" style="left:236px;top:174px;width:2px;height:2px;border-radius:50%;background:#d8f6ff;box-shadow:0 0 2.5px 1px rgba(120,210,255,.75)"></div><div class="a" style="left:218px;top:149px;width:2px;height:2px;border-radius:50%;background:#d8f6ff;box-shadow:0 0 2.5px 1px rgba(120,210,255,.75)"></div><div class="a" style="left:214px;top:195px;width:2px;height:2px;border-radius:50%;background:#d8f6ff;box-shadow:0 0 2.5px 1px rgba(120,210,255,.75)"></div><div class="a" style="left:388.4px;top:116.4px;width:3.2px;height:3.2px;border-radius:50%;background:#d8f6ff;box-shadow:0 0 4.0px 1.6px rgba(120,210,255,.75)"></div><div class="a" style="left:392px;top:138px;width:2px;height:2px;border-radius:50%;background:#d8f6ff;box-shadow:0 0 2.5px 1px rgba(120,210,255,.75)"></div><div class="a" style="left:385px;top:171px;width:2px;height:2px;border-radius:50%;background:#d8f6ff;box-shadow:0 0 2.5px 1px rgba(120,210,255,.75)"></div><div class="a" style="left:397px;top:103px;width:2px;height:2px;border-radius:50%;background:#d8f6ff;box-shadow:0 0 2.5px 1px rgba(120,210,255,.75)"></div><div class="a" style="left:371px;top:65px;width:2px;height:2px;border-radius:50%;background:#d8f6ff;box-shadow:0 0 2.5px 1px rgba(120,210,255,.75)"></div><div class="a" style="left:298.8px;top:53.8px;width:2.4px;height:2.4px;border-radius:50%;background:#d8f6ff;box-shadow:0 0 3.0px 1.2px rgba(120,210,255,.75)"></div><div class="a" style="left:339px;top:40px;width:2px;height:2px;border-radius:50%;background:#d8f6ff;box-shadow:0 0 2.5px 1px rgba(120,210,255,.75)"></div><div class="a" style="left:235px;top:85px;width:2px;height:2px;border-radius:50%;background:#d8f6ff;box-shadow:0 0 2.5px 1px rgba(120,210,255,.75)"></div><div class="a" style="left:363px;top:111px;width:2px;height:2px;border-radius:50%;background:#d8f6ff;box-shadow:0 0 2.5px 1px rgba(120,210,255,.75)"></div><div class="a" style="left:366.7px;top:187.7px;width:2.6px;height:2.6px;border-radius:50%;background:#d8f6ff;box-shadow:0 0 3.25px 1.3px rgba(120,210,255,.75)"></div><div class="a" style="left:232px;top:193px;width:2px;height:2px;border-radius:50%;background:#d8f6ff;box-shadow:0 0 2.5px 1px rgba(120,210,255,.75)"></div><div class="a" style="left:225px;top:119px;width:2px;height:2px;border-radius:50%;background:#d8f6ff;box-shadow:0 0 2.5px 1px rgba(120,210,255,.75)"></div><div class="a" style="left:354.5px;top:116.5px;width:3.0px;height:3.0px;border-radius:50%;background:#d8f6ff;box-shadow:0 0 3.75px 1.5px rgba(120,210,255,.75)"></div><div class="a" style="left:359.8px;top:175.8px;width:2.4px;height:2.4px;border-radius:50%;background:#d8f6ff;box-shadow:0 0 3.0px 1.2px rgba(120,210,255,.75)"></div><div class="a" style="left:263px;top:185px;width:2px;height:2px;border-radius:50%;background:#d8f6ff;box-shadow:0 0 2.5px 1px rgba(120,210,255,.75)"></div><div class="a" style="left:279px;top:199px;width:2px;height:2px;border-radius:50%;background:#d8f6ff;box-shadow:0 0 2.5px 1px rgba(120,210,255,.75)"></div><div class="a" style="left:253.8px;top:162.8px;width:2.4px;height:2.4px;border-radius:50%;background:#d8f6ff;box-shadow:0 0 3.0px 1.2px rgba(120,210,255,.75)"></div><div class="a" style="left:348.5px;top:193.5px;width:3.0px;height:3.0px;border-radius:50%;background:#d8f6ff;box-shadow:0 0 3.75px 1.5px rgba(120,210,255,.75)"></div><div class="a" style="left:379px;top:99px;width:2px;height:2px;border-radius:50%;background:#d8f6ff;box-shadow:0 0 2.5px 1px rgba(120,210,255,.75)"></div><div class="a" style="left:207px;top:169px;width:2px;height:2px;border-radius:50%;background:#d8f6ff;box-shadow:0 0 2.5px 1px rgba(120,210,255,.75)"></div><div class="a" style="left:393.8px;top:156.8px;width:2.4px;height:2.4px;border-radius:50%;background:#d8f6ff;box-shadow:0 0 3.0px 1.2px rgba(120,210,255,.75)"></div></div></div>
<div class="a" style="left:0;top:0;width:100%;height:100%;background:rgba(0,0,0,.42)"></div>
<div class="a nw" style="left:0;top:47px;width:100%;text-align:center;font-size:10.2px;color:#fff;font-weight:bold;line-height:13px;text-shadow:0 0 2px rgba(0,0,0,.4)">プレビューしています</div>
</div>
<div class="a" style="left:740px;top:368px;width:228px;height:160px;border-radius:12px;border:1px solid #d6dadf;background:#eef2f7"></div>
<div class="a" style="left:752px;top:380.5px;width:68.5px;height:21px;border-radius:10.5px;background:#d3e3fd"></div>
<svg class="a" style="left:758.5px;top:385px" width="12" height="12" viewBox="0 0 24 24"><path d="M2 5Q2 4 3 4h12v5h7v12Q22 22 21 22H3Q2 22 2 21z" fill="#2a2a2a"/><path d="M19 0l1.3 3.2L23.5 4.5l-3.2 1.3L19 9l-1.3-3.2L14.5 4.5l3.2-1.3z" fill="#1f1f1f"/></svg>
<div class="a nw" style="left:775px;top:384.5px;font-size:10px;color:#1f1f1f;line-height:13px;-webkit-text-stroke:.5px #1f1f1f">スライド</div>
<svg class="a" style="left:830px;top:385px" width="12" height="12" viewBox="0 0 24 24" fill="none" stroke="#444746" stroke-width="2.4"><path d="M14 3H3v18h18V10"/><path d="M6 17l4-5 3 3 2-2 3 4z" fill="#444746" stroke="none"/><path d="M19 0l1.3 3.2L23.5 4.5l-3.2 1.3L19 9l-1.3-3.2L14.5 4.5l3.2-1.3z" fill="#444746" stroke="none"/></svg>
<div class="a nw" style="left:846px;top:384.5px;font-size:10px;color:#444746;line-height:13px;-webkit-text-stroke:.35px #444746">画像</div>
<svg class="a" style="left:880.5px;top:385px" width="12" height="12" viewBox="0 0 24 24" fill="none" stroke="#444746" stroke-width="2.4"><path d="M14 3H3v18h18V10"/><path d="M6 16l4-4 3 3 5-5" stroke-linejoin="round"/><path d="M19 0l1.3 3.2L23.5 4.5l-3.2 1.3L19 9l-1.3-3.2L14.5 4.5l3.2-1.3z" fill="#444746" stroke="none"/></svg>
<div class="a nw" style="left:897px;top:384.5px;font-size:10px;color:#444746;line-height:13px;-webkit-text-stroke:.35px #444746;width:62px;overflow:hidden">インフォグラ</div>
<div class="a" style="left:752px;top:415px;width:203.6px;height:71.8px;border-radius:12px;background:#fff"></div>
<div class="a nw" style="left:763px;top:426.5px;font-size:10px;letter-spacing:-.14px;color:#5f6368;line-height:15px">ここに示された情報に基づいて、対象者<br>向けの 3 つの実行可能な項目または推...</div>
<div class="a nw" style="left:881px;top:464.3px;width:40.4px;height:10.5px;background:#d3e3fd;color:#0b57d0;font-size:8.5px;font-weight:bold;line-height:10.5px;text-align:center;border-radius:2px">ベータ版</div>
<div class="a" style="left:926.5px;top:458.5px;width:22px;height:22px;border-radius:50%;background:#e3e3e3"></div>
<svg class="a" style="left:932.5px;top:464.5px" width="10" height="10" viewBox="0 0 10 10" fill="none" stroke="#9a9c9e" stroke-width="1.2"><path d="M5 9V1.5M1.8 4.5L5 1.3 8.2 4.5"/></svg>
<div class="a nw" style="left:741px;top:493.5px;width:226px;text-align:center;font-size:7.8px;font-weight:bold;color:#3c4043;line-height:11.5px">プレゼンテーションのコンテンツが使用される場合がありま<br>す。<span style="margin-left:4px;text-decoration:underline">詳細</span></div><!-- rail -->
<div class="a" style="left:979px;top:158px;width:34.5px;height:34.5px;border-radius:12px;background:#d3e3fd"></div>
<svg class="a" style="left:988.5px;top:168px" width="12.69" height="14.5" viewBox="0 0 14 16"><defs><linearGradient id="bn988.5" x1="0" y1="1" x2="1" y2="0"><stop offset="0" stop-color="#f29a0e"/><stop offset="1" stop-color="#f7b52c"/></linearGradient></defs><path d="M5.2 1.2 Q9.6 2.8 9.8 9 L6 9.6 Q3.6 6 5.2 1.2Z" fill="#fbd888"/><path d="M0.8 15.2 Q0 10.6 3.8 8.6 L9.6 8.6 Q10.8 12.4 7.2 14.6 Q3.6 16.2 0.8 15.2Z" fill="url(#bn988.5)"/><path d="M9.2 8.4 Q12.8 9.8 12 13.2 Q10.6 14.4 8.8 13.6 Q10.4 11 9.2 8.4Z" fill="#f5cf7c"/><circle cx="11.6" cy="3.4" r="1.9" fill="#f9ab00"/></svg>
<div class="a" style="left:980px;top:196px;width:32px;height:72.5px;border-radius:16px;background:#f0f3f7"></div>
<div class="a" style="left:980px;top:274px;width:32px;height:102px;border-radius:16px;background:#f0f3f7"></div>
<svg class="a" style="left:989.5px;top:211px" width="12" height="12" viewBox="0 0 24 24" fill="none" stroke="#444746" stroke-width="2.2"><path d="M12 3H3v18h18v-7"/><path d="M6 17l3.5-4 2.5 3 2-2 3 3z" fill="#444746" stroke="none"/><circle cx="17" cy="6" r="3"/><path d="M19.2 8.2L22 11"/></svg>
<svg class="a" style="left:989.5px;top:242px" width="12" height="12" viewBox="0 0 24 24" fill="none" stroke="#444746" stroke-width="2.2"><path d="M2.5 5h7l2 2.5h10v12h-19z" stroke-linejoin="round"/></svg>
<svg class="a" style="left:988.5px;top:287px" width="13" height="13" viewBox="0 0 13 13" fill="none" stroke="#444746" stroke-width="1.3"><circle cx="6.5" cy="6.5" r="5.5"/><circle cx="6.5" cy="6.5" r="3.1" fill="#444746" stroke="none"/></svg>
<svg class="a" style="left:989.5px;top:318px" width="12" height="12" viewBox="0 0 24 24" fill="none" stroke="#444746" stroke-width="2.2"><rect x="2.5" y="5" width="14" height="14"/><path d="M17 10l5-3v10l-5-3" fill="#444746"/><circle cx="9.5" cy="10" r="2" fill="#444746" stroke="none"/><path d="M6 16q3.5-3 7 0" fill="#444746"/></svg>
<svg class="a" style="left:989.5px;top:349px" width="12" height="12" viewBox="0 0 24 24" fill="none" stroke="#444746" stroke-width="2.2"><rect x="3" y="3" width="18" height="18"/><path d="M9.5 7.5L16 12l-6.5 4.5z" stroke-linejoin="round"/></svg>
<div class="a" style="left:1007px;top:504px;width:30px;height:30px;border-radius:50%;background:#fff;box-shadow:0 0 2.5px rgba(0,0,0,.22)"></div>
<svg class="a" style="left:1014.5px;top:516.5px" width="5" height="7" viewBox="0 0 5 7" fill="none" stroke="#444746" stroke-width="1.6"><path d="M4.2 0.6L1.2 3.5 4.2 6.4"/></svg>
</body></html>
